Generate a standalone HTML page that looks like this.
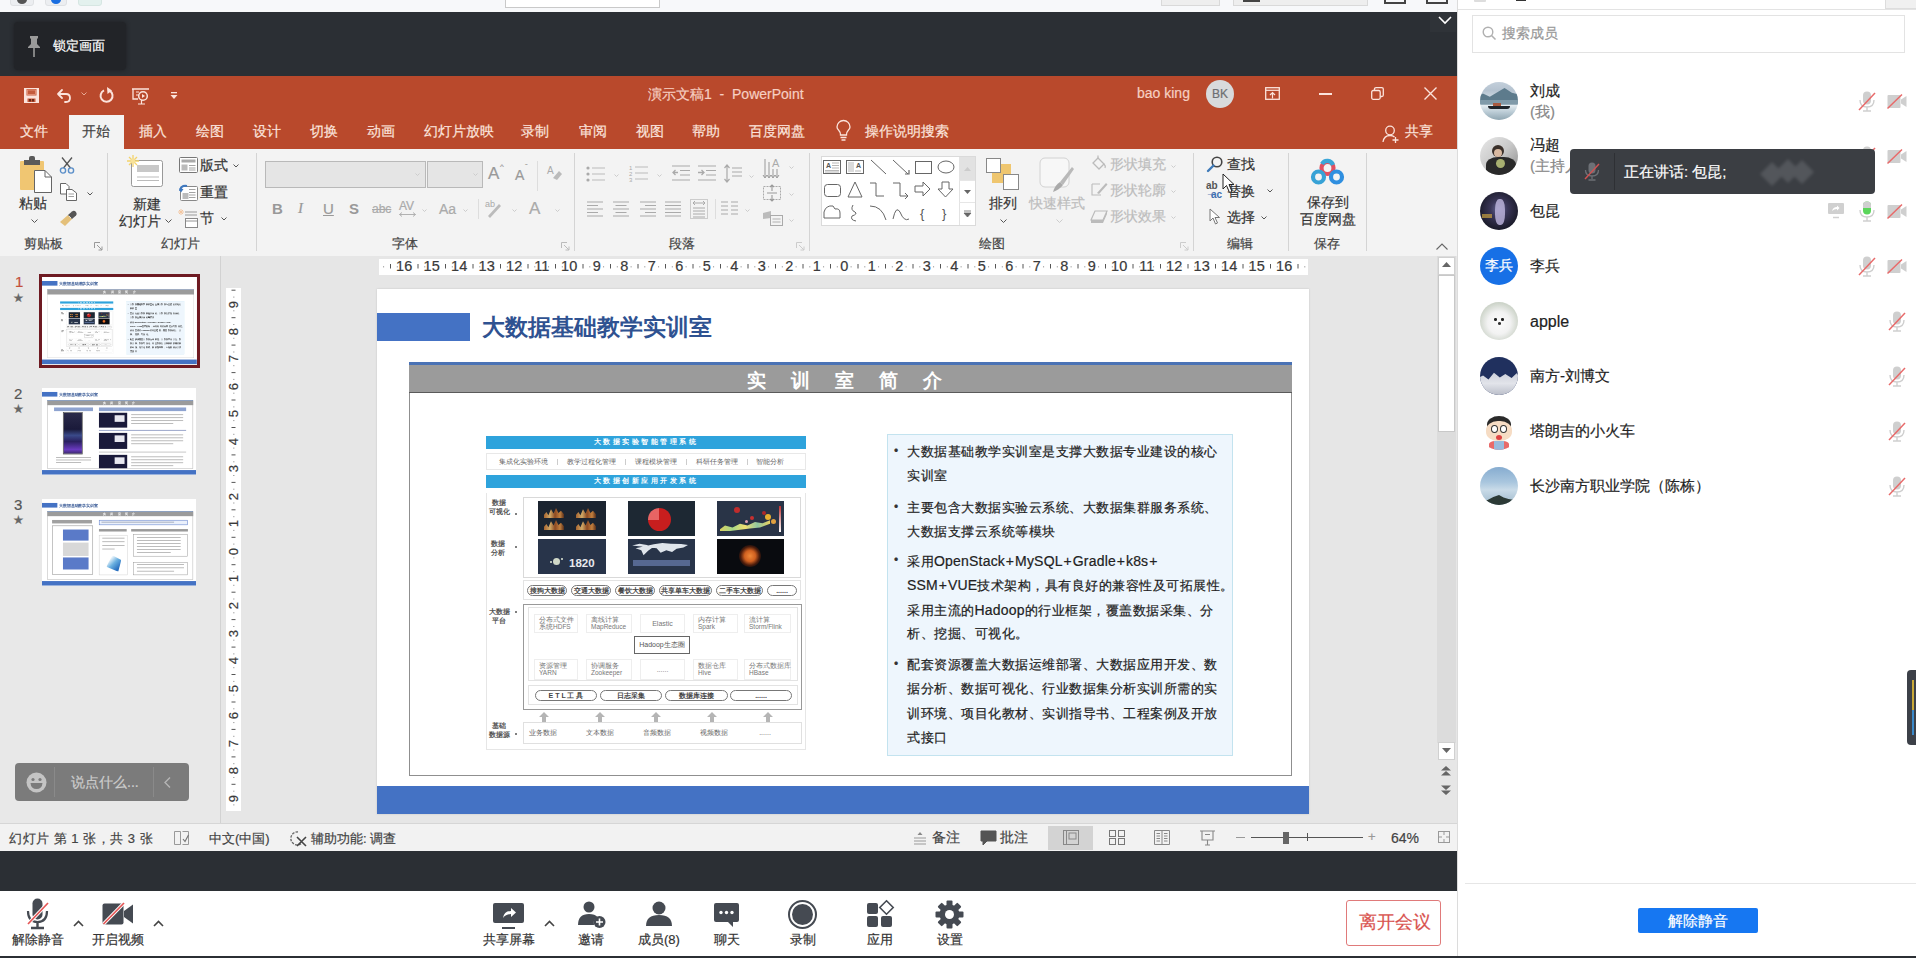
<!DOCTYPE html>
<html><head><meta charset="utf-8">
<style>
*{margin:0;padding:0;box-sizing:border-box}
html,body{width:1916px;height:958px;overflow:hidden;background:#fff;font-family:"Liberation Sans",sans-serif}
.a{position:absolute}
.t{position:absolute;white-space:nowrap;line-height:1;-webkit-text-stroke:0.2px currentColor}
svg{position:absolute;overflow:visible}
.t[style*="font-weight:bold"],.t[style*="font-size:7px"],.t[style*="font-size:6.5px"],.t[style*="font-size:7.5px"]{-webkit-text-stroke:0}
</style></head><body>
<!-- top strip -->
<div class="a" style="left:0;top:0;width:1457px;height:12px;background:#f7f8fa"></div>
<!-- dark top bar -->
<div class="a" style="left:0;top:12px;width:1457px;height:64px;background:#2b2f34"></div>
<!-- orange title+tabs -->
<div class="a" style="left:0;top:76px;width:1457px;height:73px;background:#b9492c"></div>
<!-- ribbon -->
<div class="a" style="left:0;top:149px;width:1457px;height:107px;background:#f3f3f3"></div>
<!-- main -->
<div class="a" style="left:0;top:256px;width:1457px;height:567px;background:#e6e6e6"></div>
<!-- status -->
<div class="a" style="left:0;top:823px;width:1457px;height:28px;background:#f2f2f2;border-top:1px solid #d6d6d6"></div>
<!-- dark bottom bar -->
<div class="a" style="left:0;top:851px;width:1457px;height:40px;background:#2b2f34"></div>
<!-- toolbar -->
<div class="a" style="left:0;top:891px;width:1457px;height:65px;background:#fff"></div>
<div class="a" style="left:0;top:956px;width:1916px;height:2px;background:#2b2f34"></div>
<!-- right panel -->
<div class="a" style="left:1457px;top:0;width:459px;height:956px;background:#fff;border-left:1px solid #dcdcdc"></div>

<!-- top strip items -->
<div class="a" style="left:10px;top:-4px;width:24px;height:10px;background:#eceef1;border:1px solid #dfe1e4;border-radius:3px"></div>
<div class="a" style="left:17px;top:-5px;width:10px;height:9px;border-radius:50%;background:#555"></div>
<div class="a" style="left:45px;top:-4px;width:22px;height:10px;background:#eceef1;border:1px solid #dfe1e4;border-radius:3px"></div>
<div class="a" style="left:51px;top:-5px;width:10px;height:9px;border-radius:50%;background:#1a6ee0"></div>
<div class="a" style="left:78px;top:-4px;width:24px;height:10px;background:#e3f1ee;border:1px solid #d6e6e2;border-radius:3px"></div>
<div class="a" style="left:505px;top:-2px;width:155px;height:10px;background:#fff;border:1px solid #c9c9c9"></div>
<div class="a" style="left:1161px;top:-2px;width:59px;height:8px;background:#eeeeee;border:1px solid #d9d9d9"></div>
<div class="a" style="left:1233px;top:-2px;width:135px;height:8px;background:#eeeeee;border:1px solid #d9d9d9"></div>
<div class="a" style="left:1243px;top:-2px;width:17px;height:4px;background:#444"></div>
<div class="a" style="left:1384px;top:-2px;width:22px;height:6px;border:2px solid #444;border-top:none"></div>
<div class="a" style="left:1426px;top:-2px;width:22px;height:6px;border:2px solid #444;border-top:none"></div>
<!-- chevron in dark bar -->
<div class="a" style="left:1430px;top:12px;width:26px;height:20px;background:#2f3338"></div>
<svg style="left:1438px;top:16px" width="14" height="9"><polyline points="1,1 7,7 13,1" fill="none" stroke="#fff" stroke-width="1.6"/></svg>
<!-- lock button -->
<div class="a" style="left:14px;top:22px;width:112px;height:48px;background:#222428;border-radius:4px;box-shadow:0 0 4px #1d1f22"></div>
<svg style="left:27px;top:35px" width="14" height="22" viewBox="0 0 14 22"><path d="M3,1 H11 V3 L10,4 V9 L13,12 V13 H1 V12 L4,9 V4 L3,3 Z" fill="#9a9a9a"/><rect x="6.2" y="13" width="1.6" height="9" fill="#9a9a9a"/></svg>
<div class="t" style="left:53px;top:39px;font-size:13px;color:#fff">锁定画面</div>

<!-- QAT -->
<svg style="left:24px;top:88px" width="15" height="15" viewBox="0 0 15 15"><rect x="0" y="0" width="15" height="15" fill="#fbe3dc"/><rect x="2.5" y="1" width="10" height="6.5" fill="#c45a3c"/><rect x="3.5" y="2" width="8" height="4.5" fill="none" stroke="#e89a80" stroke-width="0.8"/><rect x="3.5" y="10.5" width="8" height="3.5" fill="#c45a3c"/><rect x="5" y="11" width="2" height="2.5" fill="#6a2a1a"/><rect x="8" y="11" width="2" height="2.5" fill="#6a2a1a"/></svg>
<svg style="left:56px;top:88px" width="16" height="16" viewBox="0 0 16 16"><path d="M2,6 L6,2 M2,6 L6,10 M2,6 H10 Q14,6 14,10 Q14,14 10,14 H9" fill="none" stroke="#fbe3dc" stroke-width="1.8" stroke-linecap="round"/></svg>
<svg style="left:81px;top:92px" width="6" height="4"><polyline points="0.5,0.5 3,3 5.5,0.5" fill="none" stroke="#e8a994" stroke-width="1"/></svg>
<svg style="left:99px;top:87px" width="16" height="17" viewBox="0 0 16 17"><path d="M10.5,3.6 A6,6 0 1 1 5,3.4" fill="none" stroke="#fbe3dc" stroke-width="2"/><path d="M8,0 L13,3.5 L8.5,7 Z" fill="#fbe3dc"/></svg>
<svg style="left:131px;top:88px" width="19" height="17" viewBox="0 0 19 17"><path d="M1,1 H18 M2,1 V11 H7" fill="none" stroke="#fbe3dc" stroke-width="1.3"/><path d="M5,4 H8 M5,7 H8" stroke="#fbe3dc" stroke-width="1"/><circle cx="12" cy="8" r="4.3" fill="none" stroke="#fbe3dc" stroke-width="1.5"/><path d="M11,6 L14,8 L11,10 Z" fill="#fbe3dc"/><path d="M7,16 H14 M10.5,12 V16" stroke="#fbe3dc" stroke-width="1.2"/></svg>
<svg style="left:170px;top:92px" width="8" height="8" viewBox="0 0 8 8"><rect x="1" y="0" width="6" height="1.3" fill="#fbe3dc"/><path d="M0.5,3 H7.5 L4,7 Z" fill="#fbe3dc"/></svg>
<div class="t" style="left:648px;top:87px;font-size:14px;color:#f6cfc2;letter-spacing:0px">演示文稿1 &nbsp;- &nbsp;PowerPoint</div>
<div class="t" style="left:1137px;top:86px;font-size:14px;color:#f6cfc2">bao king</div>
<div class="a" style="left:1206px;top:80px;width:28px;height:28px;border-radius:50%;background:#d8dadc"></div>
<div class="t" style="left:1210px;top:88px;font-size:12px;color:#6d6f72;width:20px;text-align:center">BK</div>
<svg style="left:1265px;top:87px" width="15" height="13" viewBox="0 0 15 13"><rect x="0.7" y="0.7" width="13.6" height="11.6" fill="none" stroke="#fbe3dc" stroke-width="1.3"/><path d="M0.7,3.3 H14.3" stroke="#fbe3dc" stroke-width="1.2"/><path d="M7.5,11.5 V5.5 M5,8 L7.5,5.5 L10,8" fill="none" stroke="#fbe3dc" stroke-width="1.2"/></svg>
<div class="a" style="left:1319px;top:93px;width:13px;height:1.5px;background:#fbe3dc"></div>
<svg style="left:1371px;top:87px" width="13" height="13" viewBox="0 0 13 13"><rect x="0.7" y="3.5" width="8.5" height="8.8" rx="1.5" fill="none" stroke="#fbe3dc" stroke-width="1.3"/><path d="M3.5,3.5 V2 Q3.5,0.7 5,0.7 H10.8 Q12.3,0.7 12.3,2 V8 Q12.3,9.5 10.8,9.5 H9.3" fill="none" stroke="#fbe3dc" stroke-width="1.3"/></svg>
<svg style="left:1424px;top:87px" width="13" height="13" viewBox="0 0 13 13"><path d="M0.5,0.5 L12.5,12.5 M12.5,0.5 L0.5,12.5" stroke="#fbe3dc" stroke-width="1.4"/></svg>
<!-- tabs -->
<div class="a" style="left:69px;top:115px;width:55px;height:34px;background:#f3f3f3"></div>
<div class="t" style="left:20px;top:124px;font-size:14px;color:#fbe3dc">文件</div>
<div class="t" style="left:82px;top:124px;font-size:14px;color:#444">开始</div>
<div class="t" style="left:139px;top:124px;font-size:14px;color:#fbe3dc">插入</div>
<div class="t" style="left:196px;top:124px;font-size:14px;color:#fbe3dc">绘图</div>
<div class="t" style="left:253px;top:124px;font-size:14px;color:#fbe3dc">设计</div>
<div class="t" style="left:310px;top:124px;font-size:14px;color:#fbe3dc">切换</div>
<div class="t" style="left:367px;top:124px;font-size:14px;color:#fbe3dc">动画</div>
<div class="t" style="left:424px;top:124px;font-size:14px;color:#fbe3dc">幻灯片放映</div>
<div class="t" style="left:521px;top:124px;font-size:14px;color:#fbe3dc">录制</div>
<div class="t" style="left:579px;top:124px;font-size:14px;color:#fbe3dc">审阅</div>
<div class="t" style="left:636px;top:124px;font-size:14px;color:#fbe3dc">视图</div>
<div class="t" style="left:692px;top:124px;font-size:14px;color:#fbe3dc">帮助</div>
<div class="t" style="left:749px;top:124px;font-size:14px;color:#fbe3dc">百度网盘</div>
<svg style="left:836px;top:122px" width="15" height="20" viewBox="0 0 15 20"><path d="M4.5,13 Q4.5,10 2.5,8 Q1,6.5 1,5 A6.5,6.5 0 0 1 14,5 Q14,6.5 12.5,8 Q10.5,10 10.5,13 Z" fill="none" stroke="#fbe3dc" stroke-width="1.3"/><path d="M4.5,15.5 H10.5 M5.5,18 H9.5" stroke="#fbe3dc" stroke-width="1.3"/></svg>
<div class="t" style="left:865px;top:124px;font-size:14px;color:#fbe3dc">操作说明搜索</div>
<svg style="left:1382px;top:125px" width="17" height="18" viewBox="0 0 17 18"><circle cx="8" cy="5.5" r="4.3" fill="none" stroke="#fbe3dc" stroke-width="1.3"/><path d="M1,17 Q2,10.5 8,10.5 Q11,10.5 12.5,12" fill="none" stroke="#fbe3dc" stroke-width="1.3"/><path d="M13.5,12 V18 M10.5,15 H16.5" stroke="#fbe3dc" stroke-width="1.3"/></svg>
<div class="t" style="left:1405px;top:124px;font-size:14px;color:#fbe3dc">共享</div>

<!-- ===== RIBBON ===== -->
<!-- separators -->
<div class="a" style="left:107px;top:153px;width:1px;height:98px;background:#d4d4d4"></div>
<div class="a" style="left:256px;top:153px;width:1px;height:98px;background:#d4d4d4"></div>
<div class="a" style="left:574px;top:153px;width:1px;height:98px;background:#d4d4d4"></div>
<div class="a" style="left:809px;top:153px;width:1px;height:98px;background:#d4d4d4"></div>
<div class="a" style="left:1193px;top:153px;width:1px;height:98px;background:#d4d4d4"></div>
<div class="a" style="left:1288px;top:153px;width:1px;height:98px;background:#d4d4d4"></div>
<div class="a" style="left:1366px;top:153px;width:1px;height:98px;background:#d4d4d4"></div>
<!-- group labels -->
<div class="t" style="left:24px;top:237px;font-size:13px;color:#444">剪贴板</div>
<div class="t" style="left:161px;top:237px;font-size:13px;color:#444">幻灯片</div>
<div class="t" style="left:392px;top:237px;font-size:13px;color:#444">字体</div>
<div class="t" style="left:669px;top:237px;font-size:13px;color:#444">段落</div>
<div class="t" style="left:979px;top:237px;font-size:13px;color:#444">绘图</div>
<div class="t" style="left:1227px;top:237px;font-size:13px;color:#444">编辑</div>
<div class="t" style="left:1314px;top:237px;font-size:13px;color:#444">保存</div>
<!-- launchers -->
<svg style="left:94px;top:242px" width="9" height="9" viewBox="0 0 9 9"><path d="M0.5,6 V0.5 H6 M3,3 L8,8 M8,4.5 V8 H4.5" fill="none" stroke="#999" stroke-width="1"/></svg>
<svg style="left:561px;top:242px" width="9" height="9" viewBox="0 0 9 9"><path d="M0.5,6 V0.5 H6 M3,3 L8,8 M8,4.5 V8 H4.5" fill="none" stroke="#bbb" stroke-width="1"/></svg>
<svg style="left:796px;top:242px" width="9" height="9" viewBox="0 0 9 9"><path d="M0.5,6 V0.5 H6 M3,3 L8,8 M8,4.5 V8 H4.5" fill="none" stroke="#ccc" stroke-width="1"/></svg>
<svg style="left:1180px;top:242px" width="9" height="9" viewBox="0 0 9 9"><path d="M0.5,6 V0.5 H6 M3,3 L8,8 M8,4.5 V8 H4.5" fill="none" stroke="#ccc" stroke-width="1"/></svg>
<svg style="left:1436px;top:243px" width="12" height="7"><polyline points="0.5,6.5 6,1 11.5,6.5" fill="none" stroke="#666" stroke-width="1.1"/></svg>

<!-- clipboard -->
<div class="a" style="left:20px;top:161px;width:24px;height:29px;background:#f0c672;border-radius:1px"></div>
<div class="a" style="left:24px;top:160px;width:16px;height:5px;background:#5a5a5a"></div>
<div class="a" style="left:29px;top:156px;width:6px;height:5px;background:#5a5a5a;border-radius:2px 2px 0 0"></div>
<svg style="left:34px;top:170px" width="18" height="23" viewBox="0 0 18 23"><path d="M0.5,0.5 H11 L17.5,7 V22.5 H0.5 Z" fill="#fff" stroke="#666" stroke-width="1"/><path d="M11,0.5 V7 H17.5" fill="none" stroke="#666" stroke-width="1"/></svg>
<div class="t" style="left:19px;top:196px;font-size:14px;color:#333">粘贴</div>
<svg style="left:31px;top:219px" width="7" height="4"><polyline points="0.5,0.5 3.5,3.5 6.5,0.5" fill="none" stroke="#555" stroke-width="1"/></svg>
<svg style="left:59px;top:157px" width="16" height="17" viewBox="0 0 16 17"><path d="M3,0.5 L11.5,11 M13,0.5 L4.5,11" stroke="#555" stroke-width="1.3"/><circle cx="4" cy="13.5" r="2.6" fill="none" stroke="#5b8fc9" stroke-width="1.4"/><circle cx="12" cy="13.5" r="2.6" fill="none" stroke="#5b8fc9" stroke-width="1.4"/></svg>
<svg style="left:60px;top:183px" width="17" height="18" viewBox="0 0 17 18"><path d="M0.5,0.5 H6 L9,3.5 V11 H0.5 Z" fill="#fff" stroke="#666" stroke-width="1"/><path d="M6.5,6.5 H12 L16.5,10 V17.5 H6.5 Z" fill="#fff" stroke="#666" stroke-width="1"/><path d="M8.5,11 H14 M8.5,13.5 H14" stroke="#888" stroke-width="0.8"/></svg>
<svg style="left:87px;top:192px" width="6" height="4"><polyline points="0.5,0.5 3,3 5.5,0.5" fill="none" stroke="#555" stroke-width="1"/></svg>
<svg style="left:59px;top:210px" width="19" height="17" viewBox="0 0 19 17"><path d="M1,12 L9,5 L13,9 L6,16 Z" fill="#e4c07a"/><path d="M9,5 L13,1.5 Q15,0 17,2 Q18.5,4 17,5.5 L13,9 Z" fill="#555"/><path d="M10,6 L12,8" stroke="#ddd" stroke-width="1"/></svg>

<!-- slides group -->
<svg style="left:127px;top:155px" width="37" height="33" viewBox="0 0 37 33"><rect x="4.5" y="5.5" width="31" height="26" rx="2" fill="#fff" stroke="#999" stroke-width="1"/><rect x="10" y="10" width="22" height="7" fill="#c8c8c8"/><path d="M10,22 H32 M10,25.5 H32" stroke="#bbb" stroke-width="1"/><g stroke="#f3d36b" stroke-width="1.3"><path d="M6,0 V12 M0,6 H12 M2,2 L10,10 M10,2 L2,10"/></g><circle cx="6" cy="6" r="2.2" fill="#f7e29a"/></svg>
<div class="t" style="left:133px;top:197px;font-size:14px;color:#333">新建</div>
<div class="t" style="left:119px;top:214px;font-size:14px;color:#333">幻灯片</div>
<svg style="left:165px;top:219px" width="7" height="4"><polyline points="0.5,0.5 3.5,3.5 6.5,0.5" fill="none" stroke="#555" stroke-width="1"/></svg>
<svg style="left:179px;top:157px" width="19" height="16" viewBox="0 0 19 16"><rect x="0.5" y="0.5" width="18" height="15" rx="1" fill="#fff" stroke="#777" stroke-width="1"/><rect x="2.5" y="2.5" width="14" height="3" fill="#aaa"/><rect x="2.5" y="7.5" width="6" height="6" fill="#bbb"/><path d="M10,8.5 H16.5 M10,11 H16.5 M10,13 H16.5" stroke="#999" stroke-width="0.9"/></svg>
<div class="t" style="left:200px;top:158px;font-size:14px;color:#333">版式</div>
<svg style="left:233px;top:164px" width="6" height="4"><polyline points="0.5,0.5 3,3 5.5,0.5" fill="none" stroke="#555" stroke-width="1"/></svg>
<svg style="left:179px;top:184px" width="19" height="17" viewBox="0 0 19 17"><rect x="1.5" y="2.5" width="17" height="14" rx="1" fill="#fff" stroke="#888" stroke-width="1"/><rect x="3.5" y="9" width="6" height="6" fill="#bbb"/><path d="M10,5.5 H16.5 M10,8.5 H16.5 M10,11 H16.5 M10,13.5 H16.5" stroke="#999" stroke-width="0.9"/><path d="M1,7 Q2,1 8,2" fill="none" stroke="#3e78c0" stroke-width="2"/><path d="M0,4.5 L2,8.5 L4.5,5 Z" fill="#3e78c0"/></svg>
<div class="t" style="left:200px;top:185px;font-size:14px;color:#333">重置</div>
<svg style="left:178px;top:209px" width="20" height="19" viewBox="0 0 20 19"><rect x="7.5" y="9.5" width="12" height="9" fill="#fff" stroke="#888" stroke-width="1"/><path d="M7.5,12 H19.5" stroke="#888" stroke-width="0.9"/><path d="M7,3 H19 M7,6 H19" stroke="#999" stroke-width="1"/><g stroke="#f3c6a0" stroke-width="1"><path d="M3,0 V6 M0,3 H6 M1,1 L5,5 M5,1 L1,5"/></g></svg>
<div class="t" style="left:200px;top:211px;font-size:14px;color:#333">节</div>
<svg style="left:221px;top:217px" width="6" height="4"><polyline points="0.5,0.5 3,3 5.5,0.5" fill="none" stroke="#555" stroke-width="1"/></svg>

<!-- font group -->
<div class="a" style="left:265px;top:161px;width:161px;height:27px;background:#e5e5e5;border:1px solid #b9b9b9"></div>
<svg style="left:415px;top:173px" width="5" height="3"><polyline points="0.5,0.5 2.5,2.5 4.5,0.5" fill="none" stroke="#ccc" stroke-width="1"/></svg>
<div class="a" style="left:427px;top:161px;width:56px;height:27px;background:#e5e5e5;border:1px solid #b9b9b9"></div>
<svg style="left:473px;top:173px" width="5" height="3"><polyline points="0.5,0.5 2.5,2.5 4.5,0.5" fill="none" stroke="#ccc" stroke-width="1"/></svg>
<div class="t" style="left:488px;top:165px;font-size:17px;color:#999">A</div>
<div class="t" style="left:500px;top:163px;font-size:8px;color:#999">^</div>
<div class="t" style="left:515px;top:168px;font-size:14px;color:#999">A</div>
<div class="t" style="left:525px;top:163px;font-size:8px;color:#999">ˇ</div>
<div class="a" style="left:537px;top:161px;width:1px;height:30px;background:#ddd"></div>
<svg style="left:547px;top:165px" width="15" height="16" viewBox="0 0 15 16"><text x="0" y="9" font-size="10" fill="#aaa" font-family="Liberation Sans">A</text><path d="M6,13 L12,6 L15,9 L10,15 Z" fill="#bbb"/></svg>
<div class="t" style="left:272px;top:201px;font-size:15px;font-weight:bold;color:#999">B</div>
<div class="t" style="left:298px;top:201px;font-size:15px;font-style:italic;color:#999;font-family:'Liberation Serif'">I</div>
<div class="t" style="left:323px;top:201px;font-size:15px;color:#999;text-decoration:underline">U</div>
<div class="t" style="left:349px;top:201px;font-size:15px;font-weight:bold;color:#999">S</div>
<div class="t" style="left:372px;top:203px;font-size:12px;color:#aaa;text-decoration:line-through">abc</div>
<div class="t" style="left:399px;top:200px;font-size:12px;color:#aaa">AV</div>
<svg style="left:399px;top:212px" width="17" height="5"><path d="M0.5,2.5 H16.5 M0.5,2.5 L3,0.5 M0.5,2.5 L3,4.5 M16.5,2.5 L14,0.5 M16.5,2.5 L14,4.5" fill="none" stroke="#aaa" stroke-width="0.9"/></svg>
<svg style="left:422px;top:209px" width="5" height="3"><polyline points="0.5,0.5 2.5,2.5 4.5,0.5" fill="none" stroke="#ccc" stroke-width="1"/></svg>
<div class="t" style="left:439px;top:202px;font-size:14px;color:#aaa">Aa</div>
<svg style="left:463px;top:209px" width="5" height="3"><polyline points="0.5,0.5 2.5,2.5 4.5,0.5" fill="none" stroke="#ccc" stroke-width="1"/></svg>
<div class="a" style="left:478px;top:199px;width:1px;height:20px;background:#ddd"></div>
<svg style="left:485px;top:199px" width="18" height="19" viewBox="0 0 18 19"><text x="0" y="8" font-size="9" fill="#aaa" font-family="Liberation Sans">ab</text><path d="M3,17 L14,5 L16,7 L5,19 Z" fill="#bbb"/></svg>
<svg style="left:512px;top:209px" width="5" height="3"><polyline points="0.5,0.5 2.5,2.5 4.5,0.5" fill="none" stroke="#ccc" stroke-width="1"/></svg>
<div class="t" style="left:529px;top:200px;font-size:17px;color:#aaa">A</div>
<svg style="left:555px;top:209px" width="5" height="3"><polyline points="0.5,0.5 2.5,2.5 4.5,0.5" fill="none" stroke="#ccc" stroke-width="1"/></svg>
<!-- paragraph -->
<svg style="left:586px;top:166px" width="20" height="16" viewBox="0 0 20 16"><circle cx="2" cy="2" r="1.6" fill="#aaa"/><circle cx="2" cy="8" r="1.6" fill="#aaa"/><circle cx="2" cy="14" r="1.6" fill="#aaa"/><path d="M6,2 H19 M6,8 H19 M6,14 H19" stroke="#bbb" stroke-width="1.1"/></svg>
<svg style="left:614px;top:174px" width="5" height="3"><polyline points="0.5,0.5 2.5,2.5 4.5,0.5" fill="none" stroke="#ccc" stroke-width="1"/></svg>
<svg style="left:629px;top:164px" width="20" height="19" viewBox="0 0 20 19"><text x="0" y="6" font-size="6" fill="#aaa" font-family="Liberation Sans">1</text><text x="0" y="12" font-size="6" fill="#aaa" font-family="Liberation Sans">2</text><text x="0" y="18" font-size="6" fill="#aaa" font-family="Liberation Sans">3</text><path d="M6,3 H19 M6,9 H19 M6,15 H19" stroke="#bbb" stroke-width="1.1"/></svg>
<svg style="left:657px;top:174px" width="5" height="3"><polyline points="0.5,0.5 2.5,2.5 4.5,0.5" fill="none" stroke="#ccc" stroke-width="1"/></svg>
<svg style="left:672px;top:165px" width="19" height="16" viewBox="0 0 19 16"><path d="M0,1 H18 M8,5.5 H18 M8,10 H18 M0,15 H18" stroke="#aaa" stroke-width="1.2"/><path d="M6,7.5 H1 M3.5,5 L1,7.5 L3.5,10" stroke="#aaa" stroke-width="1.3" fill="none"/></svg>
<svg style="left:698px;top:165px" width="19" height="16" viewBox="0 0 19 16"><path d="M0,1 H18 M8,5.5 H18 M8,10 H18 M0,15 H18" stroke="#aaa" stroke-width="1.2"/><path d="M0,7.5 H6 M3.5,5 L6,7.5 L3.5,10" stroke="#aaa" stroke-width="1.3" fill="none"/></svg>
<svg style="left:724px;top:164px" width="19" height="19" viewBox="0 0 19 19"><path d="M3,1 V18 M0.5,4 L3,1 L5.5,4 M0.5,15 L3,18 L5.5,15" stroke="#aaa" stroke-width="1.2" fill="none"/><path d="M8,4 H18 M8,8 H18 M8,12 H18" stroke="#aaa" stroke-width="1.1"/></svg>
<svg style="left:749px;top:175px" width="5" height="3"><polyline points="0.5,0.5 2.5,2.5 4.5,0.5" fill="none" stroke="#ccc" stroke-width="1"/></svg>
<svg style="left:763px;top:157px" width="19" height="22" viewBox="0 0 19 22"><text x="9" y="10" font-size="11" fill="#aaa" font-family="Liberation Sans">A</text><path d="M2,2 V20 M6,5 V20 M10,12 V20 M14,12 V20 M0,18 L2,21 L4,18 M4,18 L6,21 L8,18 M8,18 L10,21 L12,18 M12,18 L14,21 L16,18" stroke="#999" stroke-width="1" fill="none"/></svg>
<svg style="left:789px;top:166px" width="5" height="3"><polyline points="0.5,0.5 2.5,2.5 4.5,0.5" fill="none" stroke="#ccc" stroke-width="1"/></svg>
<svg style="left:763px;top:184px" width="19" height="18" viewBox="0 0 19 18"><rect x="0.5" y="2.5" width="17" height="13" fill="none" stroke="#aaa" stroke-width="1" stroke-dasharray="2,1"/><path d="M9,1 V7 M7,3 L9,1 L11,3 M9,11 V17 M7,15 L9,17 L11,15 M4,9 H14" stroke="#999" stroke-width="1.1" fill="none"/></svg>
<svg style="left:789px;top:193px" width="5" height="3"><polyline points="0.5,0.5 2.5,2.5 4.5,0.5" fill="none" stroke="#ccc" stroke-width="1"/></svg>
<svg style="left:763px;top:210px" width="20" height="16" viewBox="0 0 20 16"><path d="M0,3 L8,1 L8,8 L0,9 Z" fill="#bbb"/><rect x="7.5" y="5.5" width="12" height="10" fill="#f3f3f3" stroke="#aaa" stroke-width="1"/><path d="M9.5,9 H17.5 M9.5,12 H17.5" stroke="#aaa" stroke-width="0.9"/></svg>
<svg style="left:789px;top:219px" width="5" height="3"><polyline points="0.5,0.5 2.5,2.5 4.5,0.5" fill="none" stroke="#ccc" stroke-width="1"/></svg>
<svg style="left:587px;top:201px" width="17" height="17" viewBox="0 0 17 17"><path d="M0,1 H16 M0,4.5 H11 M0,8 H16 M0,11.5 H11 M0,15 H16" stroke="#aaa" stroke-width="1.1" fill="none"/></svg>
<svg style="left:613px;top:201px" width="17" height="17" viewBox="0 0 17 17"><path d="M0,1 H16 M2.5,4.5 H13.5 M0,8 H16 M2.5,11.5 H13.5 M0,15 H16" stroke="#aaa" stroke-width="1.1" fill="none"/></svg>
<svg style="left:640px;top:201px" width="17" height="17" viewBox="0 0 17 17"><path d="M0,1 H16 M5,4.5 H16 M0,8 H16 M5,11.5 H16 M0,15 H16" stroke="#aaa" stroke-width="1.1" fill="none"/></svg>
<svg style="left:665px;top:201px" width="17" height="17" viewBox="0 0 17 17"><path d="M0,1 H16 M0,4.5 H16 M0,8 H16 M0,11.5 H16 M0,15 H16" stroke="#aaa" stroke-width="1.1" fill="none"/></svg>
<svg style="left:690px;top:199px" width="18" height="20" viewBox="0 0 18 20"><rect x="0.5" y="0.5" width="17" height="19" fill="none" stroke="#ccc" stroke-width="1"/><path d="M3,4 H15 M3,4 L5,2 M3,4 L5,6 M15,4 L13,2 M15,4 L13,6 M3,9 H15 M3,12 H15 M3,15 H15 M3,18 H15" stroke="#aaa" stroke-width="1" fill="none"/></svg>
<div class="a" style="left:715px;top:199px;width:1px;height:20px;background:#ddd"></div>
<svg style="left:721px;top:201px" width="18" height="16" viewBox="0 0 18 16"><path d="M0,1 H7 M0,5 H7 M0,9 H7 M0,13 H7 M10,1 H17 M10,5 H17 M10,9 H17 M10,13 H17" stroke="#aaa" stroke-width="1.1"/></svg>
<svg style="left:745px;top:209px" width="5" height="3"><polyline points="0.5,0.5 2.5,2.5 4.5,0.5" fill="none" stroke="#ccc" stroke-width="1"/></svg>

<!-- drawing: shapes gallery -->
<div class="a" style="left:821px;top:156px;width:155px;height:70px;background:#fff;border:1px solid #dadada"></div>
<div class="a" style="left:959px;top:157px;width:16px;height:23px;background:#e2e2e2"></div>
<div class="a" style="left:959px;top:157px;width:1px;height:68px;background:#e3e3e3"></div>
<div class="a" style="left:959px;top:180px;width:16px;height:1px;background:#e6e6e6"></div>
<div class="a" style="left:959px;top:202px;width:16px;height:1px;background:#e6e6e6"></div>
<svg style="left:964px;top:167px" width="7" height="4"><path d="M0,4 L3.5,0 L7,4 Z" fill="#ccc"/></svg>
<svg style="left:964px;top:190px" width="7" height="4"><path d="M0,0 L3.5,4 L7,0 Z" fill="#666"/></svg>
<svg style="left:964px;top:211px" width="7" height="6"><path d="M0,0 H7 M0,2 L3.5,6 L7,2 Z" fill="#666" stroke="#666" stroke-width="0.8"/></svg>
<svg style="left:822px;top:157px" width="136" height="68" viewBox="822 157 136 68" fill="none" stroke="#666" stroke-width="1">
 <rect x="823.5" y="160.5" width="17" height="13"/><text x="826" y="168" font-size="7" font-weight="bold" fill="#555" stroke="none" font-family="Liberation Sans">A</text><path d="M832,163 H839 M832,165.5 H839 M832,168 H839 M825,170.5 H839 M825,172 H839" stroke="#999" stroke-width="0.7"/>
 <rect x="846.5" y="160.5" width="17" height="13"/><text x="856" y="168" font-size="7" font-weight="bold" fill="#555" stroke="none" font-family="Liberation Sans">A</text><path d="M849,162 V172 M851,162 V172 M853,162 V172 M856,170 V172 M858,170 V172 M860,170 V172" stroke="#999" stroke-width="0.7"/>
 <path d="M871,160 L886,174"/>
 <path d="M893,160 L908,174"/><path d="M905,174 H909 V170" stroke-width="1.2"/>
 <rect x="915.5" y="161.5" width="16" height="12"/>
 <ellipse cx="946" cy="167" rx="8" ry="6"/>
 <rect x="824.5" y="184.5" width="16" height="12" rx="3"/>
 <path d="M855,182 L862,197 H848 Z"/>
 <path d="M870,183 H876 V196 H884"/>
 <path d="M893,183 H900 V196 H908 M905,193 L908,196 L905,199"/>
 <path d="M915,186 H923 V182 L930,189 L923,196 V192 H915 Z"/>
 <path d="M942,182 H949 V189 H953 L945.5,197 L938,189 H942 Z"/>
 <path d="M824,212 Q826,205 833,206 L835,209 Q840,208 840,213 V218 H824 Z"/>
 <path d="M853,205 Q850,210 855,212 Q858,214 852,216 Q850,220 856,221"/>
 <path d="M870,206 Q882,206 886,220"/>
 <path d="M893,219 Q896,205 900,212 Q904,222 909,219"/>
 <text x="920" y="218" font-size="13" fill="#555" stroke="none" font-family="Liberation Sans">{</text>
 <text x="942" y="218" font-size="13" fill="#555" stroke="none" font-family="Liberation Sans">}</text>
</svg>
<!-- arrange -->
<div class="a" style="left:992px;top:164px;width:19px;height:19px;background:#efc66f"></div>
<div class="a" style="left:986px;top:158px;width:15px;height:15px;background:#fff;border:1px solid #888"></div>
<div class="a" style="left:1003px;top:174px;width:16px;height:16px;background:#fff;border:1px solid #888"></div>
<div class="t" style="left:989px;top:196px;font-size:14px;color:#333">排列</div>
<svg style="left:1000px;top:219px" width="7" height="4"><polyline points="0.5,0.5 3.5,3.5 6.5,0.5" fill="none" stroke="#555" stroke-width="1"/></svg>
<!-- quick styles -->
<svg style="left:1039px;top:157px" width="36" height="35" viewBox="0 0 36 35"><rect x="1" y="1" width="29" height="29" rx="5" fill="#f7f7f7" stroke="#d2d2d2" stroke-width="1"/><path d="M21,25 L33,10 L35,12 L24,28 Z" fill="#b9b9b9"/><path d="M14,35 Q16,28 21,25 L24,28 Q20,33 14,35 Z" fill="#aaa"/></svg>
<div class="t" style="left:1029px;top:196px;font-size:14px;color:#bdbdbd">快速样式</div>
<svg style="left:1056px;top:219px" width="7" height="4"><polyline points="0.5,0.5 3.5,3.5 6.5,0.5" fill="none" stroke="#ccc" stroke-width="1"/></svg>
<svg style="left:1091px;top:155px" width="16" height="16" viewBox="0 0 16 16"><path d="M7,3 L13,9 L8,14 L2,8 Z" fill="none" stroke="#bbb" stroke-width="1.3"/><path d="M7,3 V0.5 M13,9 Q15,11 14,13" stroke="#bbb" stroke-width="1.2" fill="none"/></svg>
<div class="t" style="left:1110px;top:157px;font-size:14px;color:#bdbdbd">形状填充</div>
<svg style="left:1091px;top:181px" width="17" height="15" viewBox="0 0 17 15"><path d="M1,3 H9 M1,3 V14 H10" stroke="#bbb" stroke-width="1.1" fill="none"/><path d="M6,12 L15,2 L16.5,3.5 L8,13 Z" fill="#bbb"/></svg>
<div class="t" style="left:1110px;top:183px;font-size:14px;color:#bdbdbd">形状轮廓</div>
<svg style="left:1090px;top:208px" width="18" height="16" viewBox="0 0 18 16"><path d="M1,12 L5,3 H17 L13,12 Z" fill="#f3f3f3" stroke="#bbb" stroke-width="1.2"/><path d="M1,12 H13 L17,3 V6 L13,15 H1 Z" fill="#bbb"/></svg>
<div class="t" style="left:1110px;top:209px;font-size:14px;color:#bdbdbd">形状效果</div>
<svg style="left:1171px;top:165px" width="5" height="3"><polyline points="0.5,0.5 2.5,2.5 4.5,0.5" fill="none" stroke="#ccc" stroke-width="1"/></svg>
<svg style="left:1171px;top:190px" width="5" height="3"><polyline points="0.5,0.5 2.5,2.5 4.5,0.5" fill="none" stroke="#ccc" stroke-width="1"/></svg>
<svg style="left:1171px;top:216px" width="5" height="3"><polyline points="0.5,0.5 2.5,2.5 4.5,0.5" fill="none" stroke="#ccc" stroke-width="1"/></svg>

<!-- edit -->
<svg style="left:1207px;top:156px" width="16" height="16" viewBox="0 0 16 16"><circle cx="10" cy="6" r="4.8" fill="none" stroke="#444" stroke-width="1.6"/><path d="M6.5,9.5 L1,15" stroke="#3f7ab8" stroke-width="2.4" stroke-linecap="round"/></svg>
<div class="t" style="left:1227px;top:157px;font-size:14px;color:#333">查找</div>
<div class="t" style="left:1206px;top:181px;font-size:10px;color:#555;font-weight:bold">ab</div>
<div class="t" style="left:1211px;top:190px;font-size:10px;color:#3f6fb0;font-weight:bold">ac</div>
<div class="t" style="left:1206px;top:190px;font-size:8px;color:#3f6fb0">→</div>
<div class="t" style="left:1227px;top:184px;font-size:14px;color:#333">替换</div>
<svg style="left:1267px;top:189px" width="6" height="4"><polyline points="0.5,0.5 3,3 5.5,0.5" fill="none" stroke="#555" stroke-width="1"/></svg>
<svg style="left:1222px;top:173px" width="14" height="21" viewBox="0 0 14 21"><path d="M1,1 V16 L4.5,12.5 L7.5,19.5 L10,18.5 L7,11.5 H12 Z" fill="#fff" stroke="#222" stroke-width="1"/></svg>
<svg style="left:1209px;top:208px" width="13" height="17" viewBox="0 0 13 17"><path d="M1,1 V13 L4,10 L6.5,16 L8.5,15 L6,9.5 H10.5 Z" fill="#fff" stroke="#777" stroke-width="1"/></svg>
<div class="t" style="left:1227px;top:210px;font-size:14px;color:#333">选择</div>
<svg style="left:1261px;top:216px" width="6" height="4"><polyline points="0.5,0.5 3,3 5.5,0.5" fill="none" stroke="#555" stroke-width="1"/></svg>
<!-- save baidu -->
<svg style="left:1311px;top:160px" width="33" height="26" viewBox="0 0 33 26"><circle cx="16.5" cy="8" r="6" fill="none" stroke="#e2505f" stroke-width="4.2"/><circle cx="7.5" cy="17" r="5.5" fill="none" stroke="#37a2d6" stroke-width="4.2"/><circle cx="25.5" cy="17" r="5.5" fill="none" stroke="#2f8fe0" stroke-width="4.2"/><path d="M11,4 A6,6 0 0 1 22,5" stroke="#3aa6d8" stroke-width="4.2" fill="none"/></svg>
<div class="t" style="left:1307px;top:195px;font-size:14px;color:#333">保存到</div>
<div class="t" style="left:1300px;top:212px;font-size:14px;color:#333">百度网盘</div>

<!-- ===== MAIN AREA ===== -->
<div class="a" style="left:0;top:256px;width:220px;height:567px;background:#e8e8e8"></div>
<div class="a" style="left:220px;top:256px;width:1px;height:567px;background:#d2d2d2"></div>
<!-- thumbnails numbers -->
<div class="t" style="left:15px;top:274px;font-size:15px;color:#c3503a">1</div>
<div class="t" style="left:14px;top:386px;font-size:15px;color:#555">2</div>
<div class="t" style="left:14px;top:497px;font-size:15px;color:#555">3</div>
<div class="t" style="left:13px;top:292px;font-size:12px;color:#666">★</div>
<div class="t" style="left:13px;top:403px;font-size:12px;color:#666">★</div>
<div class="t" style="left:13px;top:514px;font-size:12px;color:#666">★</div>
<!-- thumb1 -->
<div class="a" style="left:42px;top:277px;width:933px;height:525px;transform:scale(0.1661);transform-origin:0 0;overflow:hidden">
<div class="a" style="left:0;top:0;width:932px;height:525px;background:#fff;overflow:hidden">
<div class="a" style="left:0px;top:24px;width:93px;height:28px;background:#4472c4"></div>
<div class="t" style="left:105px;top:27px;font-size:23px;font-weight:bold;color:#2f5291">大数据基础教学实训室</div>
<div class="a" style="left:32px;top:73px;width:883px;height:414px;border:1px solid #8f8f8f;border-top:none"></div>
<div class="a" style="left:32px;top:73px;width:883px;height:3px;background:#4a72b5"></div>
<div class="a" style="left:32px;top:76px;width:883px;height:28px;background:#9b9b9b;border-bottom:1px solid #5a5a5a"></div>
<div class="t" style="left:364.5px;top:81.5px;width:30px;text-align:center;font-size:19px;font-weight:bold;color:#fff">实</div>
<div class="t" style="left:408.4px;top:81.5px;width:30px;text-align:center;font-size:19px;font-weight:bold;color:#fff">训</div>
<div class="t" style="left:452.3px;top:81.5px;width:30px;text-align:center;font-size:19px;font-weight:bold;color:#fff">室</div>
<div class="t" style="left:496.2px;top:81.5px;width:30px;text-align:center;font-size:19px;font-weight:bold;color:#fff">简</div>
<div class="t" style="left:540.1px;top:81.5px;width:30px;text-align:center;font-size:19px;font-weight:bold;color:#fff">介</div>
<div class="a" style="left:0px;top:497px;width:934px;height:28px;background:#4472c4"></div>
<div class="a" style="left:510px;top:145px;width:346px;height:322px;background:#eef6fd;border:1px solid #c3e3ef"></div>
<div class="t" style="left:517px;top:156px;font-size:12px;color:#333">•</div>
<div class="t" style="left:530px;top:156.0px;font-size:13px;letter-spacing:0.5px;color:#222">大数据基础教学实训室是支撑大数据专业建设的核心</div>
<div class="t" style="left:530px;top:180.39999999999998px;font-size:13px;letter-spacing:0.5px;color:#222">实训室</div>
<div class="t" style="left:517px;top:212px;font-size:12px;color:#333">•</div>
<div class="t" style="left:530px;top:212.0px;font-size:13px;letter-spacing:0.5px;color:#222">主要包含大数据实验云系统、大数据集群服务系统、</div>
<div class="t" style="left:530px;top:236.39999999999998px;font-size:13px;letter-spacing:0.5px;color:#222">大数据支撑云系统等模块</div>
<div class="t" style="left:517px;top:265px;font-size:12px;color:#333">•</div>
<div class="t" style="left:530px;top:265.0px;font-size:13px;letter-spacing:0.5px;color:#222">采用<span style="font-size:14px;letter-spacing:0.2px">OpenStack<span style="margin:0 0.8px">+</span>MySQL<span style="margin:0 0.8px">+</span>Gradle<span style="margin:0 0.8px">+</span>k8s<span style="margin:0 0.8px">+</span></span></div>
<div class="t" style="left:530px;top:289.4px;font-size:13px;letter-spacing:0.5px;color:#222"><span style="font-size:14px;letter-spacing:0.2px">SSM<span style="margin:0 0.8px">+</span>VUE</span>技术架构，具有良好的兼容性及可拓展性。</div>
<div class="t" style="left:530px;top:313.79999999999995px;font-size:13px;letter-spacing:0.5px;color:#222">采用主流的<span style="font-size:14px;letter-spacing:0.2px">Hadoop</span>的行业框架，覆盖数据采集、分</div>
<div class="t" style="left:530px;top:338.20000000000005px;font-size:13px;letter-spacing:0.5px;color:#222">析、挖掘、可视化。</div>
<div class="t" style="left:517px;top:369px;font-size:12px;color:#333">•</div>
<div class="t" style="left:530px;top:369.0px;font-size:13px;letter-spacing:0.5px;color:#222">配套资源覆盖大数据运维部署、大数据应用开发、数</div>
<div class="t" style="left:530px;top:393.4px;font-size:13px;letter-spacing:0.5px;color:#222">据分析、数据可视化、行业数据集分析实训所需的实</div>
<div class="t" style="left:530px;top:417.79999999999995px;font-size:13px;letter-spacing:0.5px;color:#222">训环境、项目化教材、实训指导书、工程案例及开放</div>
<div class="t" style="left:530px;top:442.20000000000005px;font-size:13px;letter-spacing:0.5px;color:#222">式接口</div>
<div class="a" style="left:109px;top:204px;width:320px;height:257px;border:1px solid #e6e6e6;border-top:none"></div>
<div class="a" style="left:109px;top:147px;width:320px;height:13px;background:#2ea3dc"></div>
<div class="t" style="left:169.0px;top:149px;width:200px;text-align:center;font-size:7px;font-weight:bold;color:#fff;letter-spacing:2.5px">大数据实验智能管理系统</div>
<div class="a" style="left:109px;top:164px;width:320px;height:17px;border:1px solid #e8e8e8"></div>
<div class="t" style="left:116.0px;top:169px;width:60px;text-align:center;font-size:7px;color:#666">集成化实验环境</div>
<div class="t" style="left:184.0px;top:169px;width:60px;text-align:center;font-size:7px;color:#666">教学过程化管理</div>
<div class="t" style="left:249.0px;top:169px;width:60px;text-align:center;font-size:7px;color:#666">课程模块管理</div>
<div class="t" style="left:310.0px;top:169px;width:60px;text-align:center;font-size:7px;color:#666">科研任务管理</div>
<div class="t" style="left:363.0px;top:169px;width:60px;text-align:center;font-size:7px;color:#666">智能分析</div>
<div class="a" style="left:180px;top:170px;width:1px;height:6px;background:#ccc"></div>
<div class="a" style="left:248px;top:170px;width:1px;height:6px;background:#ccc"></div>
<div class="a" style="left:309px;top:170px;width:1px;height:6px;background:#ccc"></div>
<div class="a" style="left:370px;top:170px;width:1px;height:6px;background:#ccc"></div>
<div class="a" style="left:109px;top:186px;width:320px;height:13px;background:#2ea3dc"></div>
<div class="t" style="left:169.0px;top:188px;width:200px;text-align:center;font-size:7px;font-weight:bold;color:#fff;letter-spacing:2.5px">大数据创新应用开发系统</div>
<div class="t" style="left:107.0px;top:209px;width:30px;text-align:center;font-size:7px;line-height:9px;font-weight:bold;color:#555">数据<br>可视化</div>
<div class="t" style="left:106.0px;top:250px;width:30px;text-align:center;font-size:7px;line-height:9px;font-weight:bold;color:#555">数据<br>分析</div>
<div class="t" style="left:107.0px;top:318px;width:30px;text-align:center;font-size:7px;line-height:9px;font-weight:bold;color:#555">大数据<br>平台</div>
<div class="t" style="left:107.0px;top:432px;width:30px;text-align:center;font-size:7px;line-height:9px;font-weight:bold;color:#555">基础<br>数据源</div>
<div class="a" style="left:138px;top:224px;width:2px;height:2px;background:#555;border-radius:1px"></div>
<div class="a" style="left:138px;top:257px;width:2px;height:2px;background:#555;border-radius:1px"></div>
<div class="a" style="left:138px;top:322px;width:2px;height:2px;background:#555;border-radius:1px"></div>
<div class="a" style="left:138px;top:444px;width:2px;height:2px;background:#555;border-radius:1px"></div>
<div class="a" style="left:146px;top:208px;width:278px;height:81px;border:1px solid #d9d9d9"></div>
<div class="a" style="left:161.0px;top:212.0px;width:68.0px;height:35.0px;background:#1b2430"></div>
<div class="a" style="left:251.0px;top:212.0px;width:67.0px;height:35.0px;background:#1d2833"></div>
<div class="a" style="left:340.0px;top:212.0px;width:67.0px;height:35.0px;background:#293447"></div>
<div class="a" style="left:161.0px;top:250.0px;width:68.0px;height:35.0px;background:#28344a"></div>
<div class="a" style="left:251.0px;top:250.0px;width:67.0px;height:35.0px;background:#283449"></div>
<div class="a" style="left:340.0px;top:250.0px;width:67.0px;height:35.0px;background:#090b0f"></div>
<div class="a" style="left:167.0px;top:218.0px;width:20.0px;height:11.0px;background:linear-gradient(90deg,#c07030 0%,#f0c070 30%,#a05020 55%,#e09040 80%,#603018 100%);clip-path:polygon(0 100%,0 70%,12% 45%,22% 75%,35% 20%,48% 60%,60% 10%,72% 55%,85% 35%,100% 65%,100% 100%);opacity:0.85"></div>
<div class="a" style="left:199.0px;top:218.0px;width:20.0px;height:11.0px;background:linear-gradient(90deg,#c07030 0%,#f0c070 30%,#a05020 55%,#e09040 80%,#603018 100%);clip-path:polygon(0 100%,0 70%,12% 45%,22% 75%,35% 20%,48% 60%,60% 10%,72% 55%,85% 35%,100% 65%,100% 100%);opacity:0.85"></div>
<div class="a" style="left:167.0px;top:230.0px;width:20.0px;height:11.0px;background:linear-gradient(90deg,#c07030 0%,#f0c070 30%,#a05020 55%,#e09040 80%,#603018 100%);clip-path:polygon(0 100%,0 70%,12% 45%,22% 75%,35% 20%,48% 60%,60% 10%,72% 55%,85% 35%,100% 65%,100% 100%);opacity:0.85"></div>
<div class="a" style="left:199.0px;top:230.0px;width:20.0px;height:11.0px;background:linear-gradient(90deg,#c07030 0%,#f0c070 30%,#a05020 55%,#e09040 80%,#603018 100%);clip-path:polygon(0 100%,0 70%,12% 45%,22% 75%,35% 20%,48% 60%,60% 10%,72% 55%,85% 35%,100% 65%,100% 100%);opacity:0.85"></div>
<div class="a" style="left:271px;top:219px;width:23px;height:23px;border-radius:50%;background:conic-gradient(#c81e1e 0 75%,#e86464 75% 100%)"></div>
<div class="a" style="left:357.0px;top:218.0px;width:6.0px;height:6.0px;border-radius:50%;background:#c02c2c"></div>
<div class="a" style="left:372.8px;top:226.8px;width:4.4px;height:4.4px;border-radius:50%;background:#c83030"></div>
<div class="a" style="left:385.0px;top:222.0px;width:4.0px;height:4.0px;border-radius:50%;background:#b02828"></div>
<div class="a" style="left:367.5px;top:230.5px;width:3.0px;height:3.0px;border-radius:50%;background:#e0a0b0"></div>
<div class="a" style="left:388.0px;top:225.0px;width:6.0px;height:6.0px;border-radius:50%;background:#e8b030"></div>
<div class="a" style="left:393.5px;top:229.5px;width:5.0px;height:5.0px;border-radius:50%;background:#e0a040"></div>
<div class="a" style="left:343.0px;top:230.0px;width:50.0px;height:12.0px;background:linear-gradient(90deg,#d8d060,#a8d888,#f0e070,#90c8a0,#e8d060);clip-path:polygon(0 85%,10% 55%,25% 70%,40% 40%,55% 55%,70% 25%,85% 35%,100% 10%,100% 40%,80% 70%,60% 80%,40% 90%,20% 100%,0 100%)"></div>
<div class="a" style="left:402.0px;top:217.0px;width:2.0px;height:26.0px;background:linear-gradient(180deg,#c03030,#e0a0a0,#fff)"></div>
<div class="a" style="left:175.5px;top:268.5px;width:7.0px;height:7.0px;border-radius:50%;background:#d0d8c8"></div>
<div class="a" style="left:172.8px;top:271.8px;width:2.4px;height:2.4px;border-radius:50%;background:#e0e8d8"></div>
<div class="a" style="left:184.0px;top:269.0px;width:2.0px;height:2.0px;border-radius:50%;background:#e0e8d8"></div>
<div class="t" style="left:192px;top:269px;font-size:11.5px;font-weight:bold;color:#e8eaee">1820</div>
<div class="a" style="left:254.0px;top:254.0px;width:57.0px;height:13.0px;background:#dfe5ec;clip-path:polygon(2% 20%,15% 5%,28% 15%,38% 35%,30% 60%,22% 95%,18% 55%,8% 40%,40% 10%,55% 0,70% 5%,88% 8%,100% 15%,92% 35%,80% 45%,72% 70%,62% 55%,52% 75%,45% 40%)"></div>
<div class="a" style="left:256.0px;top:271.0px;width:57.0px;height:6.0px;background:#6a7fb0;opacity:0.7"></div>
<div class="a" style="left:362.0px;top:256.0px;width:22.0px;height:22.0px;border-radius:50%;background:radial-gradient(circle,#f08838 0%,#d06020 35%,rgba(120,40,10,0.6) 60%,rgba(9,11,15,0) 80%)"></div>
<div class="a" style="left:146px;top:291px;width:278px;height:20px;border:1px solid #e3e3e3"></div>
<div class="a" style="left:150px;top:296px;width:40px;height:11px;border:1px solid #777;border-radius:6px"></div>
<div class="t" style="left:150.0px;top:298px;width:40px;text-align:center;font-size:7px;font-weight:bold;color:#444">搜狗大数据</div>
<div class="a" style="left:194px;top:296px;width:40px;height:11px;border:1px solid #777;border-radius:6px"></div>
<div class="t" style="left:194.0px;top:298px;width:40px;text-align:center;font-size:7px;font-weight:bold;color:#444">交通大数据</div>
<div class="a" style="left:238px;top:296px;width:40px;height:11px;border:1px solid #777;border-radius:6px"></div>
<div class="t" style="left:238.0px;top:298px;width:40px;text-align:center;font-size:7px;font-weight:bold;color:#444">餐饮大数据</div>
<div class="a" style="left:282px;top:296px;width:53px;height:11px;border:1px solid #777;border-radius:6px"></div>
<div class="t" style="left:282.0px;top:298px;width:53px;text-align:center;font-size:7px;font-weight:bold;color:#444">共享单车大数据</div>
<div class="a" style="left:339px;top:296px;width:47px;height:11px;border:1px solid #777;border-radius:6px"></div>
<div class="t" style="left:339.0px;top:298px;width:47px;text-align:center;font-size:7px;font-weight:bold;color:#444">二手车大数据</div>
<div class="a" style="left:390px;top:296px;width:30px;height:11px;border:1px solid #777;border-radius:6px"></div>
<div class="t" style="left:390.0px;top:298px;width:30px;text-align:center;font-size:7px;font-weight:bold;color:#444">......</div>
<div class="a" style="left:146px;top:315px;width:279px;height:106px;border:1px solid #999"></div>
<div class="a" style="left:151px;top:318px;width:270px;height:74px;border:1px solid #e3e3e3"></div>
<div class="a" style="left:157px;top:325px;width:44px;height:19px;border:1px solid #eee"></div>
<div class="t" style="left:162px;top:327px;font-size:6.5px;line-height:7px;color:#777">分布式文件<br>系统HDFS</div>
<div class="a" style="left:209px;top:325px;width:46px;height:19px;border:1px solid #eee"></div>
<div class="t" style="left:214px;top:327px;font-size:6.5px;line-height:7px;color:#777">离线计算<br>MapReduce</div>
<div class="a" style="left:263px;top:325px;width:45px;height:19px;border:1px solid #eee"></div>
<div class="t" style="left:263.0px;top:331px;width:45px;text-align:center;font-size:7px;color:#777">Elastic</div>
<div class="a" style="left:316px;top:325px;width:45px;height:19px;border:1px solid #eee"></div>
<div class="t" style="left:321px;top:327px;font-size:6.5px;line-height:7px;color:#777">内存计算<br>Spark</div>
<div class="a" style="left:367px;top:325px;width:47px;height:19px;border:1px solid #eee"></div>
<div class="t" style="left:372px;top:327px;font-size:6.5px;line-height:7px;color:#777">流计算<br>Storm/Flink</div>
<div class="a" style="left:157px;top:370px;width:44px;height:21px;border:1px solid #eee"></div>
<div class="t" style="left:162px;top:373px;font-size:6.5px;line-height:7px;color:#777">资源管理<br>YARN</div>
<div class="a" style="left:209px;top:370px;width:46px;height:21px;border:1px solid #eee"></div>
<div class="t" style="left:214px;top:373px;font-size:6.5px;line-height:7px;color:#777">协调服务<br>Zookeeper</div>
<div class="a" style="left:263px;top:370px;width:45px;height:21px;border:1px solid #eee"></div>
<div class="t" style="left:263.0px;top:377px;width:45px;text-align:center;font-size:7px;color:#777">......</div>
<div class="a" style="left:316px;top:370px;width:45px;height:21px;border:1px solid #eee"></div>
<div class="t" style="left:321px;top:373px;font-size:6.5px;line-height:7px;color:#777">数据仓库<br>Hive</div>
<div class="a" style="left:367px;top:370px;width:47px;height:21px;border:1px solid #eee"></div>
<div class="t" style="left:372px;top:373px;font-size:6.5px;line-height:7px;color:#777">分布式数据库<br>HBase</div>
<div class="a" style="left:257px;top:347px;width:56px;height:18px;border:1px solid #666;background:#fff"></div>
<div class="t" style="left:257.0px;top:352px;width:56px;text-align:center;font-size:7px;color:#555">Hadoop生态圈</div>
<div class="a" style="left:151px;top:396px;width:270px;height:20px;border:1px solid #e3e3e3"></div>
<div class="a" style="left:158px;top:401px;width:62px;height:11px;border:1px solid #777;border-radius:6px"></div>
<div class="t" style="left:158.0px;top:402.5px;width:62px;text-align:center;font-size:7px;font-weight:bold;color:#444">E T L 工 具</div>
<div class="a" style="left:223px;top:401px;width:62px;height:11px;border:1px solid #777;border-radius:6px"></div>
<div class="t" style="left:223.0px;top:402.5px;width:62px;text-align:center;font-size:7px;font-weight:bold;color:#444">日志采集</div>
<div class="a" style="left:288px;top:401px;width:63px;height:11px;border:1px solid #777;border-radius:6px"></div>
<div class="t" style="left:288.0px;top:402.5px;width:63px;text-align:center;font-size:7px;font-weight:bold;color:#444">数据库连接</div>
<div class="a" style="left:353px;top:401px;width:62px;height:11px;border:1px solid #777;border-radius:6px"></div>
<div class="t" style="left:353.0px;top:402.5px;width:62px;text-align:center;font-size:7px;font-weight:bold;color:#444">......</div>
<svg style="left:162px;top:423px" width="10" height="10" viewBox="0 0 10 10"><path d="M5,0 L10,5 H7 V10 H3 V5 H0 Z" fill="#b5b5b5"/></svg>
<svg style="left:218px;top:423px" width="10" height="10" viewBox="0 0 10 10"><path d="M5,0 L10,5 H7 V10 H3 V5 H0 Z" fill="#b5b5b5"/></svg>
<svg style="left:274px;top:423px" width="10" height="10" viewBox="0 0 10 10"><path d="M5,0 L10,5 H7 V10 H3 V5 H0 Z" fill="#b5b5b5"/></svg>
<svg style="left:330px;top:423px" width="10" height="10" viewBox="0 0 10 10"><path d="M5,0 L10,5 H7 V10 H3 V5 H0 Z" fill="#b5b5b5"/></svg>
<svg style="left:386px;top:423px" width="10" height="10" viewBox="0 0 10 10"><path d="M5,0 L10,5 H7 V10 H3 V5 H0 Z" fill="#b5b5b5"/></svg>
<div class="a" style="left:146px;top:433px;width:279px;height:22px;border:1px solid #e0e0e0"></div>
<div class="t" style="left:146.0px;top:440px;width:40px;text-align:center;font-size:7px;color:#666">业务数据</div>
<div class="t" style="left:203.0px;top:440px;width:40px;text-align:center;font-size:7px;color:#666">文本数据</div>
<div class="t" style="left:260.0px;top:440px;width:40px;text-align:center;font-size:7px;color:#666">音频数据</div>
<div class="t" style="left:317.0px;top:440px;width:40px;text-align:center;font-size:7px;color:#666">视频数据</div>
<div class="t" style="left:368.0px;top:440px;width:40px;text-align:center;font-size:7px;color:#666">......</div>

</div>

</div>
<!-- thumb2 -->
<div class="a" style="left:42px;top:388px;width:933px;height:525px;transform:scale(0.1651);transform-origin:0 0;overflow:hidden">
<div class="a" style="left:0px;top:0px;width:933px;height:525px;background:#fff"></div>
<div class="a" style="left:0px;top:24px;width:93px;height:28px;background:#4472c4"></div>
<div class="t" style="left:105px;top:27px;font-size:23px;font-weight:bold;color:#2f5291">大数据基础教学实训室</div>
<div class="a" style="left:32px;top:73px;width:883px;height:414px;border:2px solid #8f8f8f;border-top:none"></div>
<div class="a" style="left:32px;top:73px;width:883px;height:4px;background:#4a72b5"></div>
<div class="a" style="left:32px;top:77px;width:884px;height:27px;background:#9b9b9b"></div>
<div class="t" style="left:364.5px;top:81.5px;width:30px;text-align:center;font-size:19px;font-weight:bold;color:#fff">实</div>
<div class="t" style="left:408.4px;top:81.5px;width:30px;text-align:center;font-size:19px;font-weight:bold;color:#fff">训</div>
<div class="t" style="left:452.3px;top:81.5px;width:30px;text-align:center;font-size:19px;font-weight:bold;color:#fff">室</div>
<div class="t" style="left:496.2px;top:81.5px;width:30px;text-align:center;font-size:19px;font-weight:bold;color:#fff">简</div>
<div class="t" style="left:540.1px;top:81.5px;width:30px;text-align:center;font-size:19px;font-weight:bold;color:#fff">介</div>
<div class="a" style="left:0px;top:497px;width:933px;height:28px;background:#4472c4"></div>
<div class="a" style="left:73px;top:118px;width:236px;height:22px;background:#8ea3d0"></div>
<div class="a" style="left:127px;top:147px;width:119px;height:255px;background:linear-gradient(180deg,#2a2a4a 0%,#1a1a3a 40%,#3a4a8a 55%,#2a2060 70%,#6a3ac0 90%,#3a2a6a 100%);border:4px solid #444"></div>
<div class="a" style="left:85px;top:418px;width:212px;height:4px;background:#9a9a9a"></div>
<div class="a" style="left:85px;top:434px;width:212px;height:4px;background:#9a9a9a"></div>
<div class="a" style="left:85px;top:450px;width:152px;height:4px;background:#9a9a9a"></div>
<div class="a" style="left:345px;top:118px;width:528px;height:22px;background:#8ea3d0"></div>
<div class="a" style="left:345px;top:150px;width:171px;height:90px;background:#1a1a3a"></div>
<div class="a" style="left:440px;top:165px;width:60px;height:40px;background:#e8e8f0"></div>
<div class="a" style="left:540px;top:160px;width:315px;height:4px;background:#9a9a9a"></div>
<div class="a" style="left:540px;top:178px;width:315px;height:4px;background:#9a9a9a"></div>
<div class="a" style="left:540px;top:196px;width:315px;height:4px;background:#9a9a9a"></div>
<div class="a" style="left:540px;top:214px;width:255px;height:4px;background:#9a9a9a"></div>
<div class="a" style="left:345px;top:272px;width:171px;height:97px;background:#1a1a3a"></div>
<div class="a" style="left:440px;top:287px;width:60px;height:40px;background:#e8e8f0"></div>
<div class="a" style="left:540px;top:282px;width:315px;height:4px;background:#9a9a9a"></div>
<div class="a" style="left:540px;top:300px;width:315px;height:4px;background:#9a9a9a"></div>
<div class="a" style="left:540px;top:318px;width:315px;height:4px;background:#9a9a9a"></div>
<div class="a" style="left:540px;top:336px;width:255px;height:4px;background:#9a9a9a"></div>
<div class="a" style="left:345px;top:405px;width:171px;height:81px;background:#1a1a3a"></div>
<div class="a" style="left:440px;top:420px;width:60px;height:40px;background:#e8e8f0"></div>
<div class="a" style="left:540px;top:415px;width:315px;height:4px;background:#9a9a9a"></div>
<div class="a" style="left:540px;top:433px;width:315px;height:4px;background:#9a9a9a"></div>
<div class="a" style="left:540px;top:451px;width:315px;height:4px;background:#9a9a9a"></div>
<div class="a" style="left:540px;top:469px;width:255px;height:4px;background:#9a9a9a"></div>
<div class="a" style="left:345px;top:254px;width:528px;height:4px;background:#6a7ab0"></div>
<div class="a" style="left:345px;top:386px;width:528px;height:4px;background:#aaa"></div>
</div>
<!-- thumb3 -->
<div class="a" style="left:42px;top:499px;width:933px;height:525px;transform:scale(0.1651);transform-origin:0 0;overflow:hidden">
<div class="a" style="left:0px;top:0px;width:933px;height:525px;background:#fff"></div>
<div class="a" style="left:0px;top:24px;width:93px;height:28px;background:#4472c4"></div>
<div class="t" style="left:105px;top:27px;font-size:23px;font-weight:bold;color:#2f5291">大数据基础教学实训室</div>
<div class="a" style="left:32px;top:73px;width:883px;height:414px;border:2px solid #8f8f8f;border-top:none"></div>
<div class="a" style="left:32px;top:73px;width:883px;height:4px;background:#4a72b5"></div>
<div class="a" style="left:32px;top:77px;width:884px;height:27px;background:#9b9b9b"></div>
<div class="t" style="left:364.5px;top:81.5px;width:30px;text-align:center;font-size:19px;font-weight:bold;color:#fff">实</div>
<div class="t" style="left:408.4px;top:81.5px;width:30px;text-align:center;font-size:19px;font-weight:bold;color:#fff">训</div>
<div class="t" style="left:452.3px;top:81.5px;width:30px;text-align:center;font-size:19px;font-weight:bold;color:#fff">室</div>
<div class="t" style="left:496.2px;top:81.5px;width:30px;text-align:center;font-size:19px;font-weight:bold;color:#fff">简</div>
<div class="t" style="left:540.1px;top:81.5px;width:30px;text-align:center;font-size:19px;font-weight:bold;color:#fff">介</div>
<div class="a" style="left:0px;top:497px;width:933px;height:28px;background:#4472c4"></div>
<div class="a" style="left:61px;top:127px;width:242px;height:21px;background:#a0a0a0"></div>
<div class="a" style="left:61px;top:161px;width:248px;height:297px;border:3px solid #888"></div>
<div class="a" style="left:127px;top:185px;width:155px;height:67px;background:#5a7ac8"></div>
<div class="a" style="left:127px;top:264px;width:155px;height:81px;background:#d8d8d8"></div>
<div class="a" style="left:127px;top:354px;width:155px;height:73px;background:#5a7ac8"></div>
<div class="a" style="left:345px;top:127px;width:539px;height:31px;background:#eaf0fb;border:3px solid #5a7ac8"></div>
<div class="a" style="left:360px;top:138px;width:440px;height:4px;background:#8a8fa0"></div>
<div class="a" style="left:345px;top:182px;width:168px;height:15px;background:#9a9a9a"></div>
<div class="a" style="left:540px;top:182px;width:344px;height:15px;background:#9a9a9a"></div>
<div class="a" style="left:345px;top:218px;width:173px;height:243px;border:2px solid #bbb"></div>
<div class="a" style="left:365px;top:235px;width:135px;height:4px;background:#9a9a9a"></div>
<div class="a" style="left:365px;top:257px;width:135px;height:4px;background:#9a9a9a"></div>
<div class="a" style="left:365px;top:279px;width:135px;height:4px;background:#9a9a9a"></div>
<div class="a" style="left:365px;top:301px;width:75px;height:4px;background:#9a9a9a"></div>
<div class="a" style="left:390px;top:340px;width:90px;height:100px;background:linear-gradient(135deg,#fff 20%,#6ab0e0 50%,#2a70c0 80%);clip-path:polygon(40% 0,100% 30%,80% 100%,0 70%)"></div>
<div class="a" style="left:552px;top:215px;width:332px;height:133px;border:3px solid #999"></div>
<div class="a" style="left:575px;top:232px;width:265px;height:4px;background:#9a9a9a"></div>
<div class="a" style="left:575px;top:250px;width:265px;height:4px;background:#9a9a9a"></div>
<div class="a" style="left:575px;top:268px;width:265px;height:4px;background:#9a9a9a"></div>
<div class="a" style="left:575px;top:286px;width:265px;height:4px;background:#9a9a9a"></div>
<div class="a" style="left:575px;top:304px;width:265px;height:4px;background:#9a9a9a"></div>
<div class="a" style="left:575px;top:322px;width:205px;height:4px;background:#9a9a9a"></div>
<div class="a" style="left:552px;top:382px;width:332px;height:79px;border:3px solid #999"></div>
<div class="a" style="left:575px;top:395px;width:285px;height:4px;background:#9a9a9a"></div>
<div class="a" style="left:575px;top:415px;width:285px;height:4px;background:#9a9a9a"></div>
<div class="a" style="left:575px;top:435px;width:225px;height:4px;background:#9a9a9a"></div>
</div>
<div class="a" style="left:39px;top:274px;width:161px;height:94px;border:3px solid #6e1a22"></div>
<!-- chat widget -->
<div class="a" style="left:15px;top:763px;width:174px;height:38px;background:#7b7b7b;border-radius:4px"></div>
<div class="a" style="left:54px;top:767px;width:1px;height:30px;background:#8a8a8a"></div>
<div class="a" style="left:153px;top:767px;width:1px;height:30px;background:#8a8a8a"></div>
<svg style="left:26px;top:772px" width="21" height="21" viewBox="0 0 21 21"><circle cx="10.5" cy="10.5" r="10" fill="#c4c4c4"/><circle cx="7" cy="7.5" r="1.6" fill="#7b7b7b"/><circle cx="14" cy="7.5" r="1.6" fill="#7b7b7b"/><path d="M4.5,11 H16.5 Q16,17 10.5,17 Q5,17 4.5,11 Z" fill="#7b7b7b"/></svg>
<div class="t" style="left:71px;top:775px;font-size:14px;color:#cdcdcd">说点什么...</div>
<svg style="left:164px;top:777px" width="7" height="11"><polyline points="6,0.5 1,5.5 6,10.5" fill="none" stroke="#b5b5b5" stroke-width="1.4"/></svg>
<!-- vertical ruler -->
<div class="a" style="left:226px;top:288px;width:15px;height:523px;background:#fff"></div>
<!-- horizontal ruler -->
<div class="a" style="left:379px;top:259px;width:929px;height:16px;background:#fff"></div>
<!-- scrollbar -->
<div class="a" style="left:1437px;top:256px;width:19px;height:487px;background:#dcdcdc"></div>
<div class="a" style="left:1438px;top:257px;width:17px;height:18px;background:#fff;border:1px solid #d0d0d0"></div>
<svg style="left:1442px;top:262px" width="9" height="5"><path d="M0,5 L4.5,0 L9,5 Z" fill="#666"/></svg>
<div class="a" style="left:1438px;top:275px;width:17px;height:157px;background:#fff;border:1px solid #c8c8c8"></div>
<div class="a" style="left:1438px;top:742px;width:17px;height:18px;background:#fff;border:1px solid #d0d0d0"></div>
<svg style="left:1442px;top:748px" width="9" height="5"><path d="M0,0 L4.5,5 L9,0 Z" fill="#666"/></svg>
<svg style="left:1441px;top:766px" width="10" height="10" viewBox="0 0 10 10"><path d="M0,4.5 L5,0 L10,4.5 Z M0,9.5 L5,5 L10,9.5 Z" fill="#666"/></svg>
<svg style="left:1441px;top:785px" width="10" height="10" viewBox="0 0 10 10"><path d="M0,0.5 L5,5 L10,0.5 Z M0,5.5 L5,10 L10,5.5 Z" fill="#666"/></svg>
<!-- ruler marks -->
<svg style="left:0;top:0" width="1916" height="958" viewBox="0 0 1916 958">
<path d="M390.5,264 V268.5 M418.0,264 V268.5 M445.5,264 V268.5 M473.0,264 V268.5 M500.5,264 V268.5 M528.0,264 V268.5 M555.5,264 V268.5 M583.0,264 V268.5 M610.5,264 V268.5 M638.0,264 V268.5 M665.5,264 V268.5 M693.0,264 V268.5 M720.5,264 V268.5 M748.0,264 V268.5 M775.5,264 V268.5 M803.0,264 V268.5 M830.5,264 V268.5 M858.0,264 V268.5 M885.5,264 V268.5 M913.0,264 V268.5 M940.5,264 V268.5 M968.0,264 V268.5 M995.5,264 V268.5 M1023.0,264 V268.5 M1050.5,264 V268.5 M1078.0,264 V268.5 M1105.5,264 V268.5 M1133.0,264 V268.5 M1160.5,264 V268.5 M1188.0,264 V268.5 M1215.5,264 V268.5 M1243.0,264 V268.5 M1270.5,264 V268.5 M1298.0,264 V268.5 " stroke="#555" stroke-width="1"/>
<path d="M383.6,266 V267.5 M397.3,266 V267.5 M411.1,266 V267.5 M424.8,266 V267.5 M438.6,266 V267.5 M452.3,266 V267.5 M466.1,266 V267.5 M479.8,266 V267.5 M493.6,266 V267.5 M507.3,266 V267.5 M521.1,266 V267.5 M534.8,266 V267.5 M548.6,266 V267.5 M562.3,266 V267.5 M576.1,266 V267.5 M589.8,266 V267.5 M603.6,266 V267.5 M617.3,266 V267.5 M631.1,266 V267.5 M644.8,266 V267.5 M658.6,266 V267.5 M672.3,266 V267.5 M686.1,266 V267.5 M699.8,266 V267.5 M713.6,266 V267.5 M727.3,266 V267.5 M741.1,266 V267.5 M754.8,266 V267.5 M768.6,266 V267.5 M782.3,266 V267.5 M796.1,266 V267.5 M809.8,266 V267.5 M823.6,266 V267.5 M837.3,266 V267.5 M851.1,266 V267.5 M864.8,266 V267.5 M878.6,266 V267.5 M892.3,266 V267.5 M906.1,266 V267.5 M919.8,266 V267.5 M933.6,266 V267.5 M947.3,266 V267.5 M961.1,266 V267.5 M974.8,266 V267.5 M988.6,266 V267.5 M1002.3,266 V267.5 M1016.1,266 V267.5 M1029.8,266 V267.5 M1043.6,266 V267.5 M1057.3,266 V267.5 M1071.1,266 V267.5 M1084.8,266 V267.5 M1098.6,266 V267.5 M1112.3,266 V267.5 M1126.1,266 V267.5 M1139.8,266 V267.5 M1153.6,266 V267.5 M1167.3,266 V267.5 M1181.1,266 V267.5 M1194.8,266 V267.5 M1208.6,266 V267.5 M1222.3,266 V267.5 M1236.1,266 V267.5 M1249.8,266 V267.5 M1263.6,266 V267.5 M1277.3,266 V267.5 M1291.1,266 V267.5 M1304.8,266 V267.5 " stroke="#aaa" stroke-width="1"/>
<path d="M231.5,290.2 H235.5 M231.5,317.7 H235.5 M231.5,345.1 H235.5 M231.5,372.6 H235.5 M231.5,400.0 H235.5 M231.5,427.5 H235.5 M231.5,454.9 H235.5 M231.5,482.4 H235.5 M231.5,509.8 H235.5 M231.5,537.3 H235.5 M231.5,564.7 H235.5 M231.5,592.2 H235.5 M231.5,619.6 H235.5 M231.5,647.1 H235.5 M231.5,674.5 H235.5 M231.5,702.0 H235.5 M231.5,729.4 H235.5 M231.5,756.9 H235.5 M231.5,784.3 H235.5 " stroke="#555" stroke-width="1"/>
<path d="M233,297.1 H234.5 M233,310.8 H234.5 M233,324.5 H234.5 M233,338.3 H234.5 M233,352.0 H234.5 M233,365.7 H234.5 M233,379.4 H234.5 M233,393.2 H234.5 M233,406.9 H234.5 M233,420.6 H234.5 M233,434.3 H234.5 M233,448.1 H234.5 M233,461.8 H234.5 M233,475.5 H234.5 M233,489.2 H234.5 M233,503.0 H234.5 M233,516.7 H234.5 M233,530.4 H234.5 M233,544.1 H234.5 M233,557.9 H234.5 M233,571.6 H234.5 M233,585.3 H234.5 M233,599.0 H234.5 M233,612.8 H234.5 M233,626.5 H234.5 M233,640.2 H234.5 M233,653.9 H234.5 M233,667.7 H234.5 M233,681.4 H234.5 M233,695.1 H234.5 M233,708.8 H234.5 M233,722.6 H234.5 M233,736.3 H234.5 M233,750.0 H234.5 M233,763.7 H234.5 M233,777.5 H234.5 M233,791.2 H234.5 M233,804.9 H234.5 " stroke="#aaa" stroke-width="1"/>
</svg>
<div class="t" style="left:389.2px;top:259px;width:30px;text-align:center;font-size:14.5px;color:#3a3a3a">16</div>
<div class="t" style="left:416.7px;top:259px;width:30px;text-align:center;font-size:14.5px;color:#3a3a3a">15</div>
<div class="t" style="left:444.2px;top:259px;width:30px;text-align:center;font-size:14.5px;color:#3a3a3a">14</div>
<div class="t" style="left:471.7px;top:259px;width:30px;text-align:center;font-size:14.5px;color:#3a3a3a">13</div>
<div class="t" style="left:499.2px;top:259px;width:30px;text-align:center;font-size:14.5px;color:#3a3a3a">12</div>
<div class="t" style="left:526.7px;top:259px;width:30px;text-align:center;font-size:14.5px;color:#3a3a3a">11</div>
<div class="t" style="left:554.2px;top:259px;width:30px;text-align:center;font-size:14.5px;color:#3a3a3a">10</div>
<div class="t" style="left:581.7px;top:259px;width:30px;text-align:center;font-size:14.5px;color:#3a3a3a">9</div>
<div class="t" style="left:609.2px;top:259px;width:30px;text-align:center;font-size:14.5px;color:#3a3a3a">8</div>
<div class="t" style="left:636.7px;top:259px;width:30px;text-align:center;font-size:14.5px;color:#3a3a3a">7</div>
<div class="t" style="left:664.2px;top:259px;width:30px;text-align:center;font-size:14.5px;color:#3a3a3a">6</div>
<div class="t" style="left:691.7px;top:259px;width:30px;text-align:center;font-size:14.5px;color:#3a3a3a">5</div>
<div class="t" style="left:719.2px;top:259px;width:30px;text-align:center;font-size:14.5px;color:#3a3a3a">4</div>
<div class="t" style="left:746.7px;top:259px;width:30px;text-align:center;font-size:14.5px;color:#3a3a3a">3</div>
<div class="t" style="left:774.2px;top:259px;width:30px;text-align:center;font-size:14.5px;color:#3a3a3a">2</div>
<div class="t" style="left:801.7px;top:259px;width:30px;text-align:center;font-size:14.5px;color:#3a3a3a">1</div>
<div class="t" style="left:829.2px;top:259px;width:30px;text-align:center;font-size:14.5px;color:#3a3a3a">0</div>
<div class="t" style="left:856.7px;top:259px;width:30px;text-align:center;font-size:14.5px;color:#3a3a3a">1</div>
<div class="t" style="left:884.2px;top:259px;width:30px;text-align:center;font-size:14.5px;color:#3a3a3a">2</div>
<div class="t" style="left:911.7px;top:259px;width:30px;text-align:center;font-size:14.5px;color:#3a3a3a">3</div>
<div class="t" style="left:939.2px;top:259px;width:30px;text-align:center;font-size:14.5px;color:#3a3a3a">4</div>
<div class="t" style="left:966.7px;top:259px;width:30px;text-align:center;font-size:14.5px;color:#3a3a3a">5</div>
<div class="t" style="left:994.2px;top:259px;width:30px;text-align:center;font-size:14.5px;color:#3a3a3a">6</div>
<div class="t" style="left:1021.7px;top:259px;width:30px;text-align:center;font-size:14.5px;color:#3a3a3a">7</div>
<div class="t" style="left:1049.2px;top:259px;width:30px;text-align:center;font-size:14.5px;color:#3a3a3a">8</div>
<div class="t" style="left:1076.7px;top:259px;width:30px;text-align:center;font-size:14.5px;color:#3a3a3a">9</div>
<div class="t" style="left:1104.2px;top:259px;width:30px;text-align:center;font-size:14.5px;color:#3a3a3a">10</div>
<div class="t" style="left:1131.7px;top:259px;width:30px;text-align:center;font-size:14.5px;color:#3a3a3a">11</div>
<div class="t" style="left:1159.2px;top:259px;width:30px;text-align:center;font-size:14.5px;color:#3a3a3a">12</div>
<div class="t" style="left:1186.7px;top:259px;width:30px;text-align:center;font-size:14.5px;color:#3a3a3a">13</div>
<div class="t" style="left:1214.2px;top:259px;width:30px;text-align:center;font-size:14.5px;color:#3a3a3a">14</div>
<div class="t" style="left:1241.7px;top:259px;width:30px;text-align:center;font-size:14.5px;color:#3a3a3a">15</div>
<div class="t" style="left:1269.2px;top:259px;width:30px;text-align:center;font-size:14.5px;color:#3a3a3a">16</div>
<div class="t" style="left:218.0px;top:297.5px;width:30px;height:13px;text-align:center;font-size:13px;color:#3a3a3a;transform:rotate(-90deg)">9</div>
<div class="t" style="left:218.0px;top:324.9px;width:30px;height:13px;text-align:center;font-size:13px;color:#3a3a3a;transform:rotate(-90deg)">8</div>
<div class="t" style="left:218.0px;top:352.4px;width:30px;height:13px;text-align:center;font-size:13px;color:#3a3a3a;transform:rotate(-90deg)">7</div>
<div class="t" style="left:218.0px;top:379.8px;width:30px;height:13px;text-align:center;font-size:13px;color:#3a3a3a;transform:rotate(-90deg)">6</div>
<div class="t" style="left:218.0px;top:407.2px;width:30px;height:13px;text-align:center;font-size:13px;color:#3a3a3a;transform:rotate(-90deg)">5</div>
<div class="t" style="left:218.0px;top:434.7px;width:30px;height:13px;text-align:center;font-size:13px;color:#3a3a3a;transform:rotate(-90deg)">4</div>
<div class="t" style="left:218.0px;top:462.1px;width:30px;height:13px;text-align:center;font-size:13px;color:#3a3a3a;transform:rotate(-90deg)">3</div>
<div class="t" style="left:218.0px;top:489.6px;width:30px;height:13px;text-align:center;font-size:13px;color:#3a3a3a;transform:rotate(-90deg)">2</div>
<div class="t" style="left:218.0px;top:517.0px;width:30px;height:13px;text-align:center;font-size:13px;color:#3a3a3a;transform:rotate(-90deg)">1</div>
<div class="t" style="left:218.0px;top:544.5px;width:30px;height:13px;text-align:center;font-size:13px;color:#3a3a3a;transform:rotate(-90deg)">0</div>
<div class="t" style="left:218.0px;top:572.0px;width:30px;height:13px;text-align:center;font-size:13px;color:#3a3a3a;transform:rotate(-90deg)">1</div>
<div class="t" style="left:218.0px;top:599.4px;width:30px;height:13px;text-align:center;font-size:13px;color:#3a3a3a;transform:rotate(-90deg)">2</div>
<div class="t" style="left:218.0px;top:626.9px;width:30px;height:13px;text-align:center;font-size:13px;color:#3a3a3a;transform:rotate(-90deg)">3</div>
<div class="t" style="left:218.0px;top:654.3px;width:30px;height:13px;text-align:center;font-size:13px;color:#3a3a3a;transform:rotate(-90deg)">4</div>
<div class="t" style="left:218.0px;top:681.8px;width:30px;height:13px;text-align:center;font-size:13px;color:#3a3a3a;transform:rotate(-90deg)">5</div>
<div class="t" style="left:218.0px;top:709.2px;width:30px;height:13px;text-align:center;font-size:13px;color:#3a3a3a;transform:rotate(-90deg)">6</div>
<div class="t" style="left:218.0px;top:736.6px;width:30px;height:13px;text-align:center;font-size:13px;color:#3a3a3a;transform:rotate(-90deg)">7</div>
<div class="t" style="left:218.0px;top:764.1px;width:30px;height:13px;text-align:center;font-size:13px;color:#3a3a3a;transform:rotate(-90deg)">8</div>
<div class="t" style="left:218.0px;top:791.5px;width:30px;height:13px;text-align:center;font-size:13px;color:#3a3a3a;transform:rotate(-90deg)">9</div>
<!-- end ruler -->
<!-- ===== SLIDE ===== -->
<div class="a" id="slide" style="left:377px;top:289px;width:932px;height:525px;background:#fff;box-shadow:0 0 2px rgba(0,0,0,0.15);overflow:hidden">
<div class="a" style="left:0px;top:24px;width:93px;height:28px;background:#4472c4"></div>
<div class="t" style="left:105px;top:27px;font-size:23px;font-weight:bold;color:#2f5291">大数据基础教学实训室</div>
<div class="a" style="left:32px;top:73px;width:883px;height:414px;border:1px solid #8f8f8f;border-top:none"></div>
<div class="a" style="left:32px;top:73px;width:883px;height:3px;background:#4a72b5"></div>
<div class="a" style="left:32px;top:76px;width:883px;height:28px;background:#9b9b9b;border-bottom:1px solid #5a5a5a"></div>
<div class="t" style="left:364.5px;top:81.5px;width:30px;text-align:center;font-size:19px;font-weight:bold;color:#fff">实</div>
<div class="t" style="left:408.4px;top:81.5px;width:30px;text-align:center;font-size:19px;font-weight:bold;color:#fff">训</div>
<div class="t" style="left:452.3px;top:81.5px;width:30px;text-align:center;font-size:19px;font-weight:bold;color:#fff">室</div>
<div class="t" style="left:496.2px;top:81.5px;width:30px;text-align:center;font-size:19px;font-weight:bold;color:#fff">简</div>
<div class="t" style="left:540.1px;top:81.5px;width:30px;text-align:center;font-size:19px;font-weight:bold;color:#fff">介</div>
<div class="a" style="left:0px;top:497px;width:934px;height:28px;background:#4472c4"></div>
<div class="a" style="left:510px;top:145px;width:346px;height:322px;background:#eef6fd;border:1px solid #c3e3ef"></div>
<div class="t" style="left:517px;top:156px;font-size:12px;color:#333">•</div>
<div class="t" style="left:530px;top:156.0px;font-size:13px;letter-spacing:0.5px;color:#222">大数据基础教学实训室是支撑大数据专业建设的核心</div>
<div class="t" style="left:530px;top:180.39999999999998px;font-size:13px;letter-spacing:0.5px;color:#222">实训室</div>
<div class="t" style="left:517px;top:212px;font-size:12px;color:#333">•</div>
<div class="t" style="left:530px;top:212.0px;font-size:13px;letter-spacing:0.5px;color:#222">主要包含大数据实验云系统、大数据集群服务系统、</div>
<div class="t" style="left:530px;top:236.39999999999998px;font-size:13px;letter-spacing:0.5px;color:#222">大数据支撑云系统等模块</div>
<div class="t" style="left:517px;top:265px;font-size:12px;color:#333">•</div>
<div class="t" style="left:530px;top:265.0px;font-size:13px;letter-spacing:0.5px;color:#222">采用<span style="font-size:14px;letter-spacing:0.2px">OpenStack<span style="margin:0 0.8px">+</span>MySQL<span style="margin:0 0.8px">+</span>Gradle<span style="margin:0 0.8px">+</span>k8s<span style="margin:0 0.8px">+</span></span></div>
<div class="t" style="left:530px;top:289.4px;font-size:13px;letter-spacing:0.5px;color:#222"><span style="font-size:14px;letter-spacing:0.2px">SSM<span style="margin:0 0.8px">+</span>VUE</span>技术架构，具有良好的兼容性及可拓展性。</div>
<div class="t" style="left:530px;top:313.79999999999995px;font-size:13px;letter-spacing:0.5px;color:#222">采用主流的<span style="font-size:14px;letter-spacing:0.2px">Hadoop</span>的行业框架，覆盖数据采集、分</div>
<div class="t" style="left:530px;top:338.20000000000005px;font-size:13px;letter-spacing:0.5px;color:#222">析、挖掘、可视化。</div>
<div class="t" style="left:517px;top:369px;font-size:12px;color:#333">•</div>
<div class="t" style="left:530px;top:369.0px;font-size:13px;letter-spacing:0.5px;color:#222">配套资源覆盖大数据运维部署、大数据应用开发、数</div>
<div class="t" style="left:530px;top:393.4px;font-size:13px;letter-spacing:0.5px;color:#222">据分析、数据可视化、行业数据集分析实训所需的实</div>
<div class="t" style="left:530px;top:417.79999999999995px;font-size:13px;letter-spacing:0.5px;color:#222">训环境、项目化教材、实训指导书、工程案例及开放</div>
<div class="t" style="left:530px;top:442.20000000000005px;font-size:13px;letter-spacing:0.5px;color:#222">式接口</div>
<div class="a" style="left:109px;top:204px;width:320px;height:257px;border:1px solid #e6e6e6;border-top:none"></div>
<div class="a" style="left:109px;top:147px;width:320px;height:13px;background:#2ea3dc"></div>
<div class="t" style="left:169.0px;top:149px;width:200px;text-align:center;font-size:7px;font-weight:bold;color:#fff;letter-spacing:2.5px">大数据实验智能管理系统</div>
<div class="a" style="left:109px;top:164px;width:320px;height:17px;border:1px solid #e8e8e8"></div>
<div class="t" style="left:116.0px;top:169px;width:60px;text-align:center;font-size:7px;color:#666">集成化实验环境</div>
<div class="t" style="left:184.0px;top:169px;width:60px;text-align:center;font-size:7px;color:#666">教学过程化管理</div>
<div class="t" style="left:249.0px;top:169px;width:60px;text-align:center;font-size:7px;color:#666">课程模块管理</div>
<div class="t" style="left:310.0px;top:169px;width:60px;text-align:center;font-size:7px;color:#666">科研任务管理</div>
<div class="t" style="left:363.0px;top:169px;width:60px;text-align:center;font-size:7px;color:#666">智能分析</div>
<div class="a" style="left:180px;top:170px;width:1px;height:6px;background:#ccc"></div>
<div class="a" style="left:248px;top:170px;width:1px;height:6px;background:#ccc"></div>
<div class="a" style="left:309px;top:170px;width:1px;height:6px;background:#ccc"></div>
<div class="a" style="left:370px;top:170px;width:1px;height:6px;background:#ccc"></div>
<div class="a" style="left:109px;top:186px;width:320px;height:13px;background:#2ea3dc"></div>
<div class="t" style="left:169.0px;top:188px;width:200px;text-align:center;font-size:7px;font-weight:bold;color:#fff;letter-spacing:2.5px">大数据创新应用开发系统</div>
<div class="t" style="left:107.0px;top:209px;width:30px;text-align:center;font-size:7px;line-height:9px;font-weight:bold;color:#555">数据<br>可视化</div>
<div class="t" style="left:106.0px;top:250px;width:30px;text-align:center;font-size:7px;line-height:9px;font-weight:bold;color:#555">数据<br>分析</div>
<div class="t" style="left:107.0px;top:318px;width:30px;text-align:center;font-size:7px;line-height:9px;font-weight:bold;color:#555">大数据<br>平台</div>
<div class="t" style="left:107.0px;top:432px;width:30px;text-align:center;font-size:7px;line-height:9px;font-weight:bold;color:#555">基础<br>数据源</div>
<div class="a" style="left:138px;top:224px;width:2px;height:2px;background:#555;border-radius:1px"></div>
<div class="a" style="left:138px;top:257px;width:2px;height:2px;background:#555;border-radius:1px"></div>
<div class="a" style="left:138px;top:322px;width:2px;height:2px;background:#555;border-radius:1px"></div>
<div class="a" style="left:138px;top:444px;width:2px;height:2px;background:#555;border-radius:1px"></div>
<div class="a" style="left:146px;top:208px;width:278px;height:81px;border:1px solid #d9d9d9"></div>
<div class="a" style="left:161.0px;top:212.0px;width:68.0px;height:35.0px;background:#1b2430"></div>
<div class="a" style="left:251.0px;top:212.0px;width:67.0px;height:35.0px;background:#1d2833"></div>
<div class="a" style="left:340.0px;top:212.0px;width:67.0px;height:35.0px;background:#293447"></div>
<div class="a" style="left:161.0px;top:250.0px;width:68.0px;height:35.0px;background:#28344a"></div>
<div class="a" style="left:251.0px;top:250.0px;width:67.0px;height:35.0px;background:#283449"></div>
<div class="a" style="left:340.0px;top:250.0px;width:67.0px;height:35.0px;background:#090b0f"></div>
<div class="a" style="left:167.0px;top:218.0px;width:20.0px;height:11.0px;background:linear-gradient(90deg,#c07030 0%,#f0c070 30%,#a05020 55%,#e09040 80%,#603018 100%);clip-path:polygon(0 100%,0 70%,12% 45%,22% 75%,35% 20%,48% 60%,60% 10%,72% 55%,85% 35%,100% 65%,100% 100%);opacity:0.85"></div>
<div class="a" style="left:199.0px;top:218.0px;width:20.0px;height:11.0px;background:linear-gradient(90deg,#c07030 0%,#f0c070 30%,#a05020 55%,#e09040 80%,#603018 100%);clip-path:polygon(0 100%,0 70%,12% 45%,22% 75%,35% 20%,48% 60%,60% 10%,72% 55%,85% 35%,100% 65%,100% 100%);opacity:0.85"></div>
<div class="a" style="left:167.0px;top:230.0px;width:20.0px;height:11.0px;background:linear-gradient(90deg,#c07030 0%,#f0c070 30%,#a05020 55%,#e09040 80%,#603018 100%);clip-path:polygon(0 100%,0 70%,12% 45%,22% 75%,35% 20%,48% 60%,60% 10%,72% 55%,85% 35%,100% 65%,100% 100%);opacity:0.85"></div>
<div class="a" style="left:199.0px;top:230.0px;width:20.0px;height:11.0px;background:linear-gradient(90deg,#c07030 0%,#f0c070 30%,#a05020 55%,#e09040 80%,#603018 100%);clip-path:polygon(0 100%,0 70%,12% 45%,22% 75%,35% 20%,48% 60%,60% 10%,72% 55%,85% 35%,100% 65%,100% 100%);opacity:0.85"></div>
<div class="a" style="left:271px;top:219px;width:23px;height:23px;border-radius:50%;background:conic-gradient(#c81e1e 0 75%,#e86464 75% 100%)"></div>
<div class="a" style="left:357.0px;top:218.0px;width:6.0px;height:6.0px;border-radius:50%;background:#c02c2c"></div>
<div class="a" style="left:372.8px;top:226.8px;width:4.4px;height:4.4px;border-radius:50%;background:#c83030"></div>
<div class="a" style="left:385.0px;top:222.0px;width:4.0px;height:4.0px;border-radius:50%;background:#b02828"></div>
<div class="a" style="left:367.5px;top:230.5px;width:3.0px;height:3.0px;border-radius:50%;background:#e0a0b0"></div>
<div class="a" style="left:388.0px;top:225.0px;width:6.0px;height:6.0px;border-radius:50%;background:#e8b030"></div>
<div class="a" style="left:393.5px;top:229.5px;width:5.0px;height:5.0px;border-radius:50%;background:#e0a040"></div>
<div class="a" style="left:343.0px;top:230.0px;width:50.0px;height:12.0px;background:linear-gradient(90deg,#d8d060,#a8d888,#f0e070,#90c8a0,#e8d060);clip-path:polygon(0 85%,10% 55%,25% 70%,40% 40%,55% 55%,70% 25%,85% 35%,100% 10%,100% 40%,80% 70%,60% 80%,40% 90%,20% 100%,0 100%)"></div>
<div class="a" style="left:402.0px;top:217.0px;width:2.0px;height:26.0px;background:linear-gradient(180deg,#c03030,#e0a0a0,#fff)"></div>
<div class="a" style="left:175.5px;top:268.5px;width:7.0px;height:7.0px;border-radius:50%;background:#d0d8c8"></div>
<div class="a" style="left:172.8px;top:271.8px;width:2.4px;height:2.4px;border-radius:50%;background:#e0e8d8"></div>
<div class="a" style="left:184.0px;top:269.0px;width:2.0px;height:2.0px;border-radius:50%;background:#e0e8d8"></div>
<div class="t" style="left:192px;top:269px;font-size:11.5px;font-weight:bold;color:#e8eaee">1820</div>
<div class="a" style="left:254.0px;top:254.0px;width:57.0px;height:13.0px;background:#dfe5ec;clip-path:polygon(2% 20%,15% 5%,28% 15%,38% 35%,30% 60%,22% 95%,18% 55%,8% 40%,40% 10%,55% 0,70% 5%,88% 8%,100% 15%,92% 35%,80% 45%,72% 70%,62% 55%,52% 75%,45% 40%)"></div>
<div class="a" style="left:256.0px;top:271.0px;width:57.0px;height:6.0px;background:#6a7fb0;opacity:0.7"></div>
<div class="a" style="left:362.0px;top:256.0px;width:22.0px;height:22.0px;border-radius:50%;background:radial-gradient(circle,#f08838 0%,#d06020 35%,rgba(120,40,10,0.6) 60%,rgba(9,11,15,0) 80%)"></div>
<div class="a" style="left:146px;top:291px;width:278px;height:20px;border:1px solid #e3e3e3"></div>
<div class="a" style="left:150px;top:296px;width:40px;height:11px;border:1px solid #777;border-radius:6px"></div>
<div class="t" style="left:150.0px;top:298px;width:40px;text-align:center;font-size:7px;font-weight:bold;color:#444">搜狗大数据</div>
<div class="a" style="left:194px;top:296px;width:40px;height:11px;border:1px solid #777;border-radius:6px"></div>
<div class="t" style="left:194.0px;top:298px;width:40px;text-align:center;font-size:7px;font-weight:bold;color:#444">交通大数据</div>
<div class="a" style="left:238px;top:296px;width:40px;height:11px;border:1px solid #777;border-radius:6px"></div>
<div class="t" style="left:238.0px;top:298px;width:40px;text-align:center;font-size:7px;font-weight:bold;color:#444">餐饮大数据</div>
<div class="a" style="left:282px;top:296px;width:53px;height:11px;border:1px solid #777;border-radius:6px"></div>
<div class="t" style="left:282.0px;top:298px;width:53px;text-align:center;font-size:7px;font-weight:bold;color:#444">共享单车大数据</div>
<div class="a" style="left:339px;top:296px;width:47px;height:11px;border:1px solid #777;border-radius:6px"></div>
<div class="t" style="left:339.0px;top:298px;width:47px;text-align:center;font-size:7px;font-weight:bold;color:#444">二手车大数据</div>
<div class="a" style="left:390px;top:296px;width:30px;height:11px;border:1px solid #777;border-radius:6px"></div>
<div class="t" style="left:390.0px;top:298px;width:30px;text-align:center;font-size:7px;font-weight:bold;color:#444">......</div>
<div class="a" style="left:146px;top:315px;width:279px;height:106px;border:1px solid #999"></div>
<div class="a" style="left:151px;top:318px;width:270px;height:74px;border:1px solid #e3e3e3"></div>
<div class="a" style="left:157px;top:325px;width:44px;height:19px;border:1px solid #eee"></div>
<div class="t" style="left:162px;top:327px;font-size:6.5px;line-height:7px;color:#777">分布式文件<br>系统HDFS</div>
<div class="a" style="left:209px;top:325px;width:46px;height:19px;border:1px solid #eee"></div>
<div class="t" style="left:214px;top:327px;font-size:6.5px;line-height:7px;color:#777">离线计算<br>MapReduce</div>
<div class="a" style="left:263px;top:325px;width:45px;height:19px;border:1px solid #eee"></div>
<div class="t" style="left:263.0px;top:331px;width:45px;text-align:center;font-size:7px;color:#777">Elastic</div>
<div class="a" style="left:316px;top:325px;width:45px;height:19px;border:1px solid #eee"></div>
<div class="t" style="left:321px;top:327px;font-size:6.5px;line-height:7px;color:#777">内存计算<br>Spark</div>
<div class="a" style="left:367px;top:325px;width:47px;height:19px;border:1px solid #eee"></div>
<div class="t" style="left:372px;top:327px;font-size:6.5px;line-height:7px;color:#777">流计算<br>Storm/Flink</div>
<div class="a" style="left:157px;top:370px;width:44px;height:21px;border:1px solid #eee"></div>
<div class="t" style="left:162px;top:373px;font-size:6.5px;line-height:7px;color:#777">资源管理<br>YARN</div>
<div class="a" style="left:209px;top:370px;width:46px;height:21px;border:1px solid #eee"></div>
<div class="t" style="left:214px;top:373px;font-size:6.5px;line-height:7px;color:#777">协调服务<br>Zookeeper</div>
<div class="a" style="left:263px;top:370px;width:45px;height:21px;border:1px solid #eee"></div>
<div class="t" style="left:263.0px;top:377px;width:45px;text-align:center;font-size:7px;color:#777">......</div>
<div class="a" style="left:316px;top:370px;width:45px;height:21px;border:1px solid #eee"></div>
<div class="t" style="left:321px;top:373px;font-size:6.5px;line-height:7px;color:#777">数据仓库<br>Hive</div>
<div class="a" style="left:367px;top:370px;width:47px;height:21px;border:1px solid #eee"></div>
<div class="t" style="left:372px;top:373px;font-size:6.5px;line-height:7px;color:#777">分布式数据库<br>HBase</div>
<div class="a" style="left:257px;top:347px;width:56px;height:18px;border:1px solid #666;background:#fff"></div>
<div class="t" style="left:257.0px;top:352px;width:56px;text-align:center;font-size:7px;color:#555">Hadoop生态圈</div>
<div class="a" style="left:151px;top:396px;width:270px;height:20px;border:1px solid #e3e3e3"></div>
<div class="a" style="left:158px;top:401px;width:62px;height:11px;border:1px solid #777;border-radius:6px"></div>
<div class="t" style="left:158.0px;top:402.5px;width:62px;text-align:center;font-size:7px;font-weight:bold;color:#444">E T L 工 具</div>
<div class="a" style="left:223px;top:401px;width:62px;height:11px;border:1px solid #777;border-radius:6px"></div>
<div class="t" style="left:223.0px;top:402.5px;width:62px;text-align:center;font-size:7px;font-weight:bold;color:#444">日志采集</div>
<div class="a" style="left:288px;top:401px;width:63px;height:11px;border:1px solid #777;border-radius:6px"></div>
<div class="t" style="left:288.0px;top:402.5px;width:63px;text-align:center;font-size:7px;font-weight:bold;color:#444">数据库连接</div>
<div class="a" style="left:353px;top:401px;width:62px;height:11px;border:1px solid #777;border-radius:6px"></div>
<div class="t" style="left:353.0px;top:402.5px;width:62px;text-align:center;font-size:7px;font-weight:bold;color:#444">......</div>
<svg style="left:162px;top:423px" width="10" height="10" viewBox="0 0 10 10"><path d="M5,0 L10,5 H7 V10 H3 V5 H0 Z" fill="#b5b5b5"/></svg>
<svg style="left:218px;top:423px" width="10" height="10" viewBox="0 0 10 10"><path d="M5,0 L10,5 H7 V10 H3 V5 H0 Z" fill="#b5b5b5"/></svg>
<svg style="left:274px;top:423px" width="10" height="10" viewBox="0 0 10 10"><path d="M5,0 L10,5 H7 V10 H3 V5 H0 Z" fill="#b5b5b5"/></svg>
<svg style="left:330px;top:423px" width="10" height="10" viewBox="0 0 10 10"><path d="M5,0 L10,5 H7 V10 H3 V5 H0 Z" fill="#b5b5b5"/></svg>
<svg style="left:386px;top:423px" width="10" height="10" viewBox="0 0 10 10"><path d="M5,0 L10,5 H7 V10 H3 V5 H0 Z" fill="#b5b5b5"/></svg>
<div class="a" style="left:146px;top:433px;width:279px;height:22px;border:1px solid #e0e0e0"></div>
<div class="t" style="left:146.0px;top:440px;width:40px;text-align:center;font-size:7px;color:#666">业务数据</div>
<div class="t" style="left:203.0px;top:440px;width:40px;text-align:center;font-size:7px;color:#666">文本数据</div>
<div class="t" style="left:260.0px;top:440px;width:40px;text-align:center;font-size:7px;color:#666">音频数据</div>
<div class="t" style="left:317.0px;top:440px;width:40px;text-align:center;font-size:7px;color:#666">视频数据</div>
<div class="t" style="left:368.0px;top:440px;width:40px;text-align:center;font-size:7px;color:#666">......</div>

</div>

<!-- ===== STATUS BAR ===== -->
<div class="t" style="left:9px;top:832px;font-size:13px;color:#444;letter-spacing:0.5px">幻灯片 第 1 张，共 3 张</div>
<svg style="left:174px;top:831px" width="15" height="14" viewBox="0 0 15 14"><path d="M0.5,0.5 H6.5 V13.5 H0.5 Z M8.5,0.5 H14.5 V13.5 H8.5" fill="none" stroke="#999" stroke-width="1"/><path d="M9,8 L11,10.5 L14.5,4" fill="none" stroke="#777" stroke-width="1.2"/></svg>
<div class="t" style="left:209px;top:832px;font-size:13px;color:#444">中文(中国)</div>
<svg style="left:290px;top:831px" width="18" height="16" viewBox="0 0 18 16"><path d="M8,1 A6.5,6.5 0 1 0 12,12" fill="none" stroke="#666" stroke-width="1.3" stroke-dasharray="2.5,1.2"/><path d="M7,6 L16,15 M16,6 L7,15" stroke="#444" stroke-width="1.6"/></svg>
<div class="t" style="left:311px;top:832px;font-size:13px;color:#444">辅助功能: 调查</div>
<svg style="left:913px;top:831px" width="14" height="14" viewBox="0 0 14 14"><path d="M7,1 L4.5,4 H9.5 Z" fill="#888"/><path d="M1,7 H13 M1,10 H13 M1,13 H13" stroke="#999" stroke-width="1.2"/></svg>
<div class="t" style="left:932px;top:831px;font-size:13.5px;color:#444">备注</div>
<svg style="left:980px;top:830px" width="17" height="16" viewBox="0 0 17 16"><path d="M1,1 H16 V11 H7 L3,15 V11 H1 Z" fill="#555" stroke="#555" stroke-width="1" stroke-linejoin="round"/></svg>
<div class="t" style="left:1000px;top:831px;font-size:13.5px;color:#444">批注</div>
<div class="a" style="left:1048px;top:826px;width:45px;height:24px;background:#d3d3d3"></div>
<svg style="left:1063px;top:830px" width="16" height="15" viewBox="0 0 16 15"><rect x="0.5" y="0.5" width="15" height="14" fill="none" stroke="#888" stroke-width="1"/><path d="M3.5,0.5 V14.5" stroke="#888"/><rect x="6" y="3" width="7" height="6" fill="none" stroke="#888"/></svg>
<svg style="left:1109px;top:830px" width="16" height="15" viewBox="0 0 16 15"><rect x="0.5" y="0.5" width="6" height="6" fill="none" stroke="#777"/><rect x="9.5" y="0.5" width="6" height="6" fill="none" stroke="#777"/><rect x="0.5" y="8.5" width="6" height="6" fill="none" stroke="#777"/><rect x="9.5" y="8.5" width="6" height="6" fill="none" stroke="#777"/></svg>
<svg style="left:1154px;top:830px" width="16" height="15" viewBox="0 0 16 15"><path d="M0.5,0.5 H15.5 V14.5 H0.5 Z M8,0.5 V14.5 M2.5,3.5 H6 M2.5,6 H6 M2.5,8.5 H6 M2.5,11 H6 M10,3.5 H13.5 M10,6 H13.5 M10,8.5 H13.5 M10,11 H13.5" fill="none" stroke="#888" stroke-width="1"/></svg>
<svg style="left:1200px;top:830px" width="16" height="16" viewBox="0 0 16 16"><path d="M0,1 H15 M2,1 V10 H13 V1 M7.5,10 V15 M5,15 H10 M5,4.5 H10" fill="none" stroke="#888" stroke-width="1.1"/></svg>
<div class="a" style="left:1236px;top:837px;width:9px;height:1.2px;background:#999"></div>
<div class="a" style="left:1251px;top:837px;width:112px;height:1.3px;background:#555"></div>
<div class="a" style="left:1283px;top:832px;width:6px;height:12px;background:#666"></div>
<div class="a" style="left:1307px;top:833px;width:1px;height:8px;background:#555"></div>
<div class="t" style="left:1368px;top:830px;font-size:13px;color:#999">+</div>
<div class="t" style="left:1391px;top:831px;font-size:14px;color:#444">64%</div>
<svg style="left:1438px;top:831px" width="12" height="12" viewBox="0 0 12 12"><rect x="0.5" y="0.5" width="11" height="11" fill="none" stroke="#999"/><path d="M6,0.5 V4 M6,8 V11.5 M0.5,6 H4 M8,6 H11.5" stroke="#999"/></svg>

<!-- ===== BOTTOM TOOLBAR ===== -->
<svg style="left:26px;top:898px" width="24" height="32" viewBox="0 0 24 32"><rect x="6.5" y="0.5" width="10" height="21" rx="5" fill="#454a52"/><path d="M2,13 Q2,24 11.5,24 Q21,24 21,13" fill="none" stroke="#454a52" stroke-width="2.2"/><path d="M11.5,24 V29 M5,30 H18" stroke="#454a52" stroke-width="2.4"/><path d="M2,26 L22,5" stroke="#fff" stroke-width="3.4"/><path d="M2,26 L22,5" stroke="#e45555" stroke-width="1.7"/></svg>
<div class="t" style="left:12px;top:932.5px;font-size:13px;color:#333">解除静音</div>
<svg style="left:73px;top:920px" width="11" height="7"><polyline points="1,6 5.5,1.5 10,6" fill="none" stroke="#444" stroke-width="1.6"/></svg>
<svg style="left:102px;top:903px" width="32" height="22" viewBox="0 0 32 22"><rect x="0.5" y="0.5" width="21" height="21" rx="2" fill="#454a52"/><path d="M22,8 L31,1.5 V20.5 L22,14 Z" fill="#454a52"/><path d="M1.5,21 L22,0" stroke="#fff" stroke-width="3.4"/><path d="M1.5,21 L22,0" stroke="#e45555" stroke-width="1.7"/></svg>
<div class="t" style="left:92px;top:932.5px;font-size:13px;color:#333">开启视频</div>
<svg style="left:153px;top:920px" width="11" height="7"><polyline points="1,6 5.5,1.5 10,6" fill="none" stroke="#444" stroke-width="1.6"/></svg>

<svg style="left:493px;top:903px" width="31" height="26" viewBox="0 0 31 26"><rect x="0" y="0" width="31" height="20" rx="2" fill="#454a52"/><path d="M9,25 H22" stroke="#454a52" stroke-width="2"/><path d="M10,15 Q11,8 18,8 V5 L23,9.5 L18,14 V11 Q13,11 10,15 Z" fill="#fff"/></svg>
<div class="t" style="left:483px;top:932.5px;font-size:13px;color:#333">共享屏幕</div>
<svg style="left:544px;top:920px" width="11" height="7"><polyline points="1,6 5.5,1.5 10,6" fill="none" stroke="#444" stroke-width="1.6"/></svg>
<svg style="left:578px;top:901px" width="28" height="27" viewBox="0 0 28 27"><circle cx="11" cy="6" r="5.5" fill="#454a52"/><path d="M0,24 Q0,13 11,13 Q17,13 19.5,16 A7,7 0 0 0 16,24 Z" fill="#454a52"/><circle cx="21.5" cy="21" r="6" fill="#454a52"/><path d="M21.5,17.5 V24.5 M18,21 H25" stroke="#fff" stroke-width="1.6"/></svg>
<div class="t" style="left:578px;top:932.5px;font-size:13px;color:#333">邀请</div>
<svg style="left:645px;top:901px" width="28" height="26" viewBox="0 0 28 26"><circle cx="14" cy="7" r="6.5" fill="#454a52"/><path d="M1,25 Q1,14 14,14 Q27,14 27,25 Z" fill="#454a52"/></svg>
<div class="t" style="left:638px;top:932.5px;font-size:13px;color:#333">成员(8)</div>
<svg style="left:713px;top:903px" width="27" height="25" viewBox="0 0 27 25"><path d="M1,2 Q1,0 3,0 H24 Q26,0 26,2 V17 Q26,19 24,19 H20 V24 L15,19 H3 Q1,19 1,17 Z" fill="#454a52"/><circle cx="8" cy="9.5" r="1.7" fill="#fff"/><circle cx="13.5" cy="9.5" r="1.7" fill="#fff"/><circle cx="19" cy="9.5" r="1.7" fill="#fff"/></svg>
<div class="t" style="left:714px;top:932.5px;font-size:13px;color:#333">聊天</div>
<svg style="left:788px;top:900px" width="29" height="29" viewBox="0 0 29 29"><circle cx="14.5" cy="14.5" r="13.5" fill="none" stroke="#454a52" stroke-width="2"/><circle cx="14.5" cy="14.5" r="10.5" fill="#454a52"/></svg>
<div class="t" style="left:790px;top:932.5px;font-size:13px;color:#333">录制</div>
<svg style="left:867px;top:900px" width="28" height="28" viewBox="0 0 28 28"><rect x="0" y="3" width="11" height="11" rx="2" fill="#454a52"/><rect x="0" y="16" width="11" height="11" rx="2" fill="#454a52"/><rect x="14" y="16" width="11" height="11" rx="2" fill="#454a52"/><path d="M19.5,0.8 L26.2,7.5 L19.5,14.2 L12.8,7.5 Z" fill="none" stroke="#454a52" stroke-width="1.6"/></svg>
<div class="t" style="left:867px;top:932.5px;font-size:13px;color:#333">应用</div>
<svg style="left:935px;top:900px" width="29" height="29" viewBox="0 0 29 29"><g fill="#454a52"><circle cx="14.5" cy="14.5" r="10"/><g id="teeth"><rect x="11.5" y="0.5" width="6" height="6" rx="1"/><rect x="11.5" y="22.5" width="6" height="6" rx="1"/><rect x="0.5" y="11.5" width="6" height="6" rx="1"/><rect x="22.5" y="11.5" width="6" height="6" rx="1"/></g><g transform="rotate(45 14.5 14.5)"><rect x="11.5" y="0.5" width="6" height="6" rx="1"/><rect x="11.5" y="22.5" width="6" height="6" rx="1"/><rect x="0.5" y="11.5" width="6" height="6" rx="1"/><rect x="22.5" y="11.5" width="6" height="6" rx="1"/></g></g><circle cx="14.5" cy="14.5" r="4.5" fill="#fff"/></svg>
<div class="t" style="left:937px;top:932.5px;font-size:13px;color:#333">设置</div>
<div class="a" style="left:1346px;top:900px;width:95px;height:46px;border:1px solid #e07a7a;border-radius:3px;background:#fff"></div>
<div class="t" style="left:1359px;top:913px;font-size:18px;color:#d9534f">离开会议</div>

<!-- ===== RIGHT PANEL ===== -->
<div class="a" style="left:1458px;top:0;width:458px;height:10px;background:#fff;border-bottom:1px solid #e3e3e3"></div>
<div class="a" style="left:1474px;top:-3px;width:12px;height:5px;background:#ddd;border-radius:1px"></div>
<div class="a" style="left:1516px;top:-3px;width:10px;height:4px;border:1px solid #333;border-top:none"></div>
<div class="a" style="left:1885px;top:-2px;width:33px;height:11px;background:#f0f0f0;border:1px solid #ddd"></div>
<div class="a" style="left:1472px;top:15px;width:433px;height:38px;background:#fff;border:1px solid #e3e3e3"></div>
<svg style="left:1482px;top:26px" width="15" height="15" viewBox="0 0 15 15"><circle cx="6" cy="6" r="4.8" fill="none" stroke="#b0b0b0" stroke-width="1.4"/><path d="M9.5,9.5 L13.5,13.5" stroke="#b0b0b0" stroke-width="1.6"/></svg>
<div class="t" style="left:1502px;top:26px;font-size:14px;color:#999">搜索成员</div>
<!-- avatars -->
<div class="a" style="left:1480px;top:82px;width:38px;height:38px;border-radius:50%;overflow:hidden;background:linear-gradient(180deg,#c3cfdb 0%,#b5c3d0 22%,#d6e0e8 50%,#e3ebf0 62%,#b9cad4 80%,#8fa6b2 100%)">
 <div class="a" style="left:-4px;top:6px;width:46px;height:16px;background:#5d7b8c;clip-path:polygon(0 100%,0 60%,15% 35%,30% 55%,50% 20%,62% 0,78% 30%,100% 45%,100% 100%)"></div>
 <div class="a" style="left:-2px;top:18px;width:42px;height:5px;background:#8aa2b0;opacity:0.8"></div>
 <div class="a" style="left:8px;top:24px;width:22px;height:2.5px;background:#1f252c;border-radius:0 0 4px 4px"></div>
 <div class="a" style="left:13px;top:21px;width:8px;height:3px;background:#a85a40"></div>
</div>
<div class="a" style="left:1480px;top:137px;width:38px;height:38px;border-radius:50%;overflow:hidden;background:linear-gradient(135deg,#e8e8e8 0%,#c9c9c9 50%,#8a8a8a 100%)">
 <div class="a" style="left:12px;top:8px;width:12px;height:12px;border-radius:50%;background:#3a302a"></div>
 <div class="a" style="left:14px;top:12px;width:8px;height:8px;border-radius:50%;background:#d8b8a0"></div>
 <div class="a" style="left:6px;top:20px;width:30px;height:20px;border-radius:40% 40% 0 0;background:#2a2a2a"></div>
 <div class="a" style="left:16px;top:22px;width:9px;height:9px;border-radius:50%;background:#a8b070"></div>
</div>
<div class="a" style="left:1480px;top:192px;width:38px;height:38px;border-radius:50%;overflow:hidden;background:radial-gradient(circle at 50% 45%,#6a6a9a 0%,#3a3658 30%,#1c1c2c 70%)">
 <div class="a" style="left:15px;top:7px;width:10px;height:26px;border-radius:40%;background:#b8b0d8;opacity:0.85"></div>
 <div class="a" style="left:2px;top:22px;width:10px;height:4px;background:#c8a040;opacity:0.7"></div>
</div>
<div class="a" style="left:1480px;top:247px;width:38px;height:38px;border-radius:50%;background:#1770e6"></div>
<div class="t" style="left:1480px;top:258px;width:38px;text-align:center;font-size:14px;color:#fff">李兵</div>
<div class="a" style="left:1480px;top:302px;width:38px;height:38px;border-radius:50%;overflow:hidden;background:radial-gradient(circle at 50% 55%,#fbfbfb 0%,#f2f2f2 40%,#c8d0c4 75%,#9aa898 100%)">
 <div class="a" style="left:14px;top:16px;width:2.5px;height:2.5px;border-radius:50%;background:#222"></div>
 <div class="a" style="left:21px;top:16px;width:2.5px;height:2.5px;border-radius:50%;background:#222"></div>
 <div class="a" style="left:17.5px;top:20px;width:3px;height:2.5px;border-radius:50%;background:#333"></div>
</div>
<div class="a" style="left:1480px;top:357px;width:38px;height:38px;border-radius:50%;overflow:hidden;background:#20305e"><div class="a" style="left:-2px;top:13px;width:42px;height:27px;background:linear-gradient(180deg,#c8ccd8,#e2e4ea 50%,#b4b8c4);clip-path:polygon(0 30%,12% 20%,25% 35%,38% 10%,52% 28%,65% 15%,80% 30%,92% 12%,100% 25%,100% 100%,0 100%)"></div></div>
<div class="a" style="left:1480px;top:412px;width:38px;height:38px;border-radius:50%;overflow:hidden;background:#fff">
 <div class="a" style="left:7px;top:4px;width:24px;height:17px;border-radius:50% 50% 40% 40%;background:#2a2a2a"></div>
 <div class="a" style="left:6px;top:9px;width:26px;height:20px;border-radius:45%;background:#f6dcc4"></div>
 <div class="a" style="left:11px;top:13px;width:7px;height:8px;border-radius:50%;background:#fff;border:1px solid #333"></div>
 <div class="a" style="left:20px;top:13px;width:7px;height:8px;border-radius:50%;background:#fff;border:1px solid #333"></div>
 <div class="a" style="left:16px;top:23px;width:6px;height:5px;border-radius:50%;background:#d44"></div>
 <div class="a" style="left:9px;top:29px;width:20px;height:10px;background:#e86a6a;border-radius:30% 30% 0 0"></div>
 <div class="a" style="left:14px;top:29px;width:10px;height:10px;background:#9bd"></div>
</div>
<div class="a" style="left:1480px;top:467px;width:38px;height:38px;border-radius:50%;overflow:hidden;background:linear-gradient(180deg,#86acd0 0%,#a9c6de 40%,#c9dbe8 60%,#9fb9cc 100%)"><div class="a" style="left:0;top:28px;width:38px;height:10px;background:#2c3a36;clip-path:polygon(0 60%,20% 50%,35% 20%,50% 0,62% 25%,75% 40%,100% 55%,100% 100%,0 100%)"></div></div>
<!-- names -->
<div class="t" style="left:1530px;top:83px;font-size:15px;color:#222">刘成</div>
<div class="t" style="left:1530px;top:104px;font-size:15px;color:#888">(我)</div>
<div class="t" style="left:1530px;top:137px;font-size:15px;color:#222">冯超</div>
<div class="t" style="left:1530px;top:158px;font-size:15px;color:#888">(主持人)</div>
<div class="t" style="left:1530px;top:203px;font-size:15px;color:#222">包昆</div>
<div class="t" style="left:1530px;top:258px;font-size:15px;color:#222">李兵</div>
<div class="t" style="left:1530px;top:314px;font-size:16px;color:#222">apple</div>
<div class="t" style="left:1530px;top:368px;font-size:15px;color:#222">南方-刘博文</div>
<div class="t" style="left:1530px;top:423px;font-size:15px;color:#222">塔朗吉的小火车</div>
<div class="t" style="left:1530px;top:478px;font-size:15px;color:#222">长沙南方职业学院（陈栋）</div>
<svg style="left:1858px;top:91px" width="18" height="21" viewBox="0 0 18 21"><rect x="5" y="0.5" width="8" height="13" rx="4" fill="#cfcfcf"/><path d="M2,9 Q2,16 9,16 Q16,16 16,9 M9,16 V19.5 M5,20 H13" fill="none" stroke="#cfcfcf" stroke-width="1.4"/><path d="M1,19 L17,2" stroke="#e86a6a" stroke-width="1.5"/></svg>
<svg style="left:1887px;top:94px" width="20" height="15" viewBox="0 0 20 15"><rect x="0.5" y="1" width="13" height="13" rx="1" fill="#cfcfcf"/><path d="M14,5.5 L19.5,2 V13 L14,9.5 Z" fill="#cfcfcf"/><path d="M0.5,14.5 L15,0.5" stroke="#e86a6a" stroke-width="1.5"/></svg>
<svg style="left:1858px;top:146px" width="18" height="21" viewBox="0 0 18 21"><rect x="5" y="0.5" width="8" height="13" rx="4" fill="#cfcfcf"/><path d="M2,9 Q2,16 9,16 Q16,16 16,9 M9,16 V19.5 M5,20 H13" fill="none" stroke="#cfcfcf" stroke-width="1.4"/><path d="M1,19 L17,2" stroke="#e86a6a" stroke-width="1.5"/></svg>
<svg style="left:1887px;top:149px" width="20" height="15" viewBox="0 0 20 15"><rect x="0.5" y="1" width="13" height="13" rx="1" fill="#cfcfcf"/><path d="M14,5.5 L19.5,2 V13 L14,9.5 Z" fill="#cfcfcf"/><path d="M0.5,14.5 L15,0.5" stroke="#e86a6a" stroke-width="1.5"/></svg>
<svg style="left:1828px;top:203px" width="16" height="16" viewBox="0 0 16 16"><rect x="0" y="0" width="16" height="11" rx="1" fill="#d0d0d0"/><path d="M4,8 Q5,4 9,4 V2.5 L11.5,5 L9,7.5 V6 Q6,6 4,8 Z" fill="#fff"/><path d="M5,14.5 H11" stroke="#d0d0d0" stroke-width="1.5"/></svg>
<svg style="left:1858px;top:201px" width="18" height="21" viewBox="0 0 18 21"><rect x="5" y="0.5" width="8" height="13" rx="4" fill="#5bd65b"/><rect x="5" y="0.5" width="8" height="6" rx="4" fill="#cfcfcf"/><rect x="5" y="4" width="8" height="3" fill="#cfcfcf"/><path d="M2,9 Q2,16 9,16 Q16,16 16,9 M9,16 V19.5 M5,20 H13" fill="none" stroke="#cfcfcf" stroke-width="1.4"/></svg>
<svg style="left:1887px;top:204px" width="20" height="15" viewBox="0 0 20 15"><rect x="0.5" y="1" width="13" height="13" rx="1" fill="#cfcfcf"/><path d="M14,5.5 L19.5,2 V13 L14,9.5 Z" fill="#cfcfcf"/><path d="M0.5,14.5 L15,0.5" stroke="#e86a6a" stroke-width="1.5"/></svg>
<svg style="left:1858px;top:256px" width="18" height="21" viewBox="0 0 18 21"><rect x="5" y="0.5" width="8" height="13" rx="4" fill="#cfcfcf"/><path d="M2,9 Q2,16 9,16 Q16,16 16,9 M9,16 V19.5 M5,20 H13" fill="none" stroke="#cfcfcf" stroke-width="1.4"/><path d="M1,19 L17,2" stroke="#e86a6a" stroke-width="1.5"/></svg>
<svg style="left:1887px;top:259px" width="20" height="15" viewBox="0 0 20 15"><rect x="0.5" y="1" width="13" height="13" rx="1" fill="#cfcfcf"/><path d="M14,5.5 L19.5,2 V13 L14,9.5 Z" fill="#cfcfcf"/><path d="M0.5,14.5 L15,0.5" stroke="#e86a6a" stroke-width="1.5"/></svg>
<svg style="left:1888px;top:311px" width="18" height="21" viewBox="0 0 18 21"><rect x="5" y="0.5" width="8" height="13" rx="4" fill="#cfcfcf"/><path d="M2,9 Q2,16 9,16 Q16,16 16,9 M9,16 V19.5 M5,20 H13" fill="none" stroke="#cfcfcf" stroke-width="1.4"/><path d="M1,19 L17,2" stroke="#e86a6a" stroke-width="1.5"/></svg>
<svg style="left:1888px;top:366px" width="18" height="21" viewBox="0 0 18 21"><rect x="5" y="0.5" width="8" height="13" rx="4" fill="#cfcfcf"/><path d="M2,9 Q2,16 9,16 Q16,16 16,9 M9,16 V19.5 M5,20 H13" fill="none" stroke="#cfcfcf" stroke-width="1.4"/><path d="M1,19 L17,2" stroke="#e86a6a" stroke-width="1.5"/></svg>
<svg style="left:1888px;top:421px" width="18" height="21" viewBox="0 0 18 21"><rect x="5" y="0.5" width="8" height="13" rx="4" fill="#cfcfcf"/><path d="M2,9 Q2,16 9,16 Q16,16 16,9 M9,16 V19.5 M5,20 H13" fill="none" stroke="#cfcfcf" stroke-width="1.4"/><path d="M1,19 L17,2" stroke="#e86a6a" stroke-width="1.5"/></svg>
<svg style="left:1888px;top:476px" width="18" height="21" viewBox="0 0 18 21"><rect x="5" y="0.5" width="8" height="13" rx="4" fill="#cfcfcf"/><path d="M2,9 Q2,16 9,16 Q16,16 16,9 M9,16 V19.5 M5,20 H13" fill="none" stroke="#cfcfcf" stroke-width="1.4"/><path d="M1,19 L17,2" stroke="#e86a6a" stroke-width="1.5"/></svg>

<!-- tooltip -->
<div class="a" style="left:1570px;top:149px;width:305px;height:45px;background:#3b3e43;border-radius:4px"></div>
<div class="a" style="left:1614px;top:153px;width:1px;height:37px;background:#2e3034"></div>
<svg style="left:1584px;top:162px" width="16" height="19" viewBox="0 0 16 19"><rect x="4.5" y="0.5" width="7" height="11" rx="3.5" fill="#6d7076"/><path d="M1.5,8 Q1.5,14 8,14 Q14.5,14 14.5,8 M8,14 V17 M4.5,18 H11.5" fill="none" stroke="#6d7076" stroke-width="1.3"/><path d="M1,17 L15,2" stroke="#d25252" stroke-width="1.4"/></svg>
<div class="t" style="left:1624px;top:164px;font-size:15px;color:#fff">正在讲话: 包昆;</div>
<svg style="left:1760px;top:157px;filter:blur(1.5px)" width="60" height="30" viewBox="0 0 60 30" opacity="0.3"><path d="M0,17 L12,5 L24,17 L12,29 Z M16,14 L28,2 L40,14 L28,26 Z M30,15 L42,3 L54,15 L42,27 Z" fill="#8a8d92"/></svg>
<!-- bottom of right panel -->
<div class="a" style="left:1465px;top:883px;width:451px;height:1px;background:#e6e6e6"></div>
<div class="a" style="left:1638px;top:908px;width:120px;height:25px;background:#1677f2;border-radius:2px"></div>
<div class="t" style="left:1638px;top:913px;width:120px;text-align:center;font-size:15px;color:#fff">解除静音</div>
<!-- side tab -->
<div class="a" style="left:1907px;top:670px;width:12px;height:75px;background:#3c4048;border-radius:4px 0 0 4px"></div>
<div class="a" style="left:1912px;top:680px;width:2px;height:30px;background:#c8a838"></div>
<div class="a" style="left:1912px;top:710px;width:2px;height:25px;background:#3a88c8"></div>
</body></html>
